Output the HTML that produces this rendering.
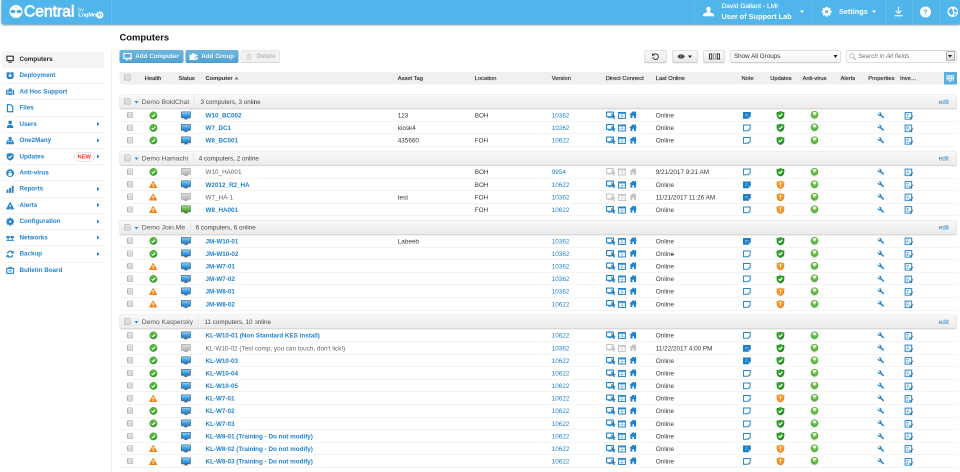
<!DOCTYPE html>
<html lang="en"><head><meta charset="utf-8"><title>LogMeIn Central - Computers</title>
<style>
*{box-sizing:border-box;margin:0;padding:0}
html,body{width:960px;height:472px;overflow:hidden;background:#fff}
body{font-family:"Liberation Sans",sans-serif;color:#333}
#p{will-change:transform;position:absolute;left:0;top:0;width:1920px;height:944px;transform:scale(.5);transform-origin:0 0;overflow:hidden;background:#fff}
.a{position:absolute;white-space:nowrap}
#hd{left:3px;top:0;width:1917px;height:49px;background:#50b5ea;box-shadow:0 1px 4px rgba(0,0,0,.5);border-radius:0 0 0 5px}
.hv{top:0;width:1px;height:49px;background:rgba(255,255,255,.22);box-shadow:-1px 0 0 rgba(0,0,0,.06)}
.si{left:3.5px;width:204px;height:32.46px;border-bottom:1px solid #e9e9e9}
.si b{position:absolute;left:35.4px;top:0;line-height:30px;font-size:12.55px;color:#2383cb;font-weight:bold}
.si svg{position:absolute;left:8.5px;top:7.6px;width:16.5px;height:16.5px}
.si i{position:absolute;left:190px;top:11.5px;border-left:5px solid #2383cb;border-top:4.5px solid transparent;border-bottom:4.5px solid transparent}
.btn{border-radius:4px;border:1.5px solid #52a2d0;border-top-color:#64b0dc;border-bottom-color:#4593c3;background:linear-gradient(#6ab7e0,#52a3d2)}
.gb{border-radius:4px;border:2px solid #e0e0e0;border-bottom-color:#cecece;background:linear-gradient(#fafafa,#e9e9e9);box-shadow:0 1px 1px rgba(0,0,0,.08)}
.th{font-size:11.5px;line-height:25.4px;color:#222;-webkit-text-stroke:.25px;top:143.6px;height:25px}
.gh{left:239px;width:1674.5px;height:29.2px;border:1.5px solid #e2e2e2;border-bottom-color:#c6c6c6;border-radius:4px;background:linear-gradient(#f9f9f9,#ebebeb);box-shadow:0 1px 1.5px rgba(0,0,0,.12)}
.gh .gn{position:absolute;left:43.6px;top:0;line-height:28.6px;font-size:13.45px;color:#555}
.gh .gc{position:absolute;top:0;line-height:28.6px;font-size:12.55px;color:#444}
.gh .gv{position:absolute;top:0;width:1px;height:26px;background:#dcdcdc;box-shadow:1px 0 0 #fafafa}
.gh .ge{position:absolute;left:1637.5px;top:0;line-height:28.6px;font-size:12.55px;color:#2383cb}
.gh .tri{position:absolute;left:28.5px;top:12.3px;border-top:5px solid #2a86c8;border-left:4.5px solid transparent;border-right:4.5px solid transparent}
.cb{position:absolute;width:13.2px;height:13.2px;border:1.6px solid #b2b2b2;border-radius:2px;background:linear-gradient(#e3e3e3,#d7d7d7)}
.r{left:239px;width:1674.5px;height:25.17px;border-bottom:1px solid #e9e9e9;font-size:12.7px;line-height:26.8px;color:#383838}
.r span,.r a{position:absolute;top:0;white-space:nowrap}
.r a{color:#2383cb;text-decoration:none}
.r a.n{font-weight:bold;left:172px;font-size:12.6px}
.r span.n{left:172px;color:#666}
.r svg{position:absolute}
svg{overflow:visible}
</style></head>
<body>
<div id="p">

<svg width="0" height="0" style="position:absolute">
<defs>
<linearGradient id="gg" x1="0" y1="0" x2="0" y2="1"><stop offset="0" stop-color="#63c440"/><stop offset="1" stop-color="#2c9a20"/></linearGradient>
<linearGradient id="sg" x1="0" y1="0" x2="0" y2="1"><stop offset="0" stop-color="#3bb030"/><stop offset="1" stop-color="#1d8a1c"/></linearGradient>
<linearGradient id="og" x1="0" y1="0" x2="0" y2="1"><stop offset="0" stop-color="#fbb040"/><stop offset="1" stop-color="#ee7a12"/></linearGradient>
<linearGradient id="mb" x1="0" y1="0" x2="0" y2="1"><stop offset="0" stop-color="#a4dcf8"/><stop offset=".45" stop-color="#4aa6e6"/><stop offset="1" stop-color="#1f7ccb"/></linearGradient>
<linearGradient id="mg" x1="0" y1="0" x2="0" y2="1"><stop offset="0" stop-color="#e4e4e4"/><stop offset="1" stop-color="#b4b4b4"/></linearGradient>
<linearGradient id="mgr" x1="0" y1="0" x2="0" y2="1"><stop offset="0" stop-color="#b4e39a"/><stop offset=".5" stop-color="#6cba4e"/><stop offset="1" stop-color="#4a9a34"/></linearGradient>
<radialGradient id="av" cx=".5" cy=".4" r=".62"><stop offset="0" stop-color="#d9f3c6"/><stop offset=".3" stop-color="#86d160"/><stop offset=".72" stop-color="#4cab31"/><stop offset=".9" stop-color="#5fb843"/><stop offset="1" stop-color="#a5dc8c"/></radialGradient>
</defs>
</svg>

<div id="hd" class="a"></div>
<div class="a hv" style="left:221.5px"></div>
<div class="a hv" style="left:1389px"></div>
<div class="a hv" style="left:1625.4px"></div>
<div class="a hv" style="left:1770px"></div>
<div class="a hv" style="left:1824px"></div>
<div class="a hv" style="left:1878px"></div>
<svg class="a" style="left:18.8px;top:9.6px;width:26px;height:26px" viewBox="-13 -13 26 26"><circle r="13" fill="#fff"/><circle cx="-7.6" r="3.3" fill="#44aae4"/><circle cx="7.6" r="3.3" fill="#44aae4"/><path d="M-5.2-4.6L-.4 0l-4.8 4.6zM5.2-4.6L.4 0l4.8 4.6z" fill="#44aae4"/></svg>
<div class="a" style="left:48px;top:1.2px;font-size:31px;line-height:43.4px;color:#fff;-webkit-text-stroke:1.5px #fff;letter-spacing:.15px;">Central</div>
<div class="a" style="left:156.5px;top:12.25px;font-size:10.5px;line-height:14.7px;color:#fff;">by</div>
<div class="a" style="left:156.5px;top:21.15px;font-size:11.5px;line-height:16.1px;color:#fff;font-weight:bold;letter-spacing:-.3px;">LogMe</div>
<div class="a" style="left:192.3px;top:22.8px;width:14.4px;height:14.4px;border-radius:7.2px;background:#fff"></div>
<div class="a" style="left:195px;top:22.25px;font-size:10.5px;line-height:14.7px;color:#50b5ea;font-weight:bold;">in</div>
<svg class="a" style="left:1405px;top:13px;width:24px;height:20px" viewBox="0 0 24 20"><path d="M12 .5c2.6 0 4.3 2 4.3 4.7 0 2-.8 3.9-2 4.9v1.5c2.5.8 7 2.3 8 3.4.7.8.9 2.6.9 4.5H.8c0-1.9.2-3.7.9-4.5 1-1.1 5.5-2.6 8-3.4v-1.5c-1.2-1-2-2.9-2-4.9C7.7 2.5 9.4.5 12 .5z" fill="#fff"/></svg>
<div class="a" style="left:1443px;top:2.56px;font-size:13.2px;line-height:18.48px;color:#fff;-webkit-text-stroke:.25px #fff;">David Gallant - LMI</div>
<div class="a" style="left:1443px;top:22.78px;font-size:14.6px;line-height:20.44px;color:#fff;font-weight:bold;">User of Support Lab</div>
<div class="a" style="left:1599.5px;top:20.5px;border-top:5.5px solid #fff;border-left:4.5px solid transparent;border-right:4.5px solid transparent"></div>
<svg class="a" style="left:1643.3px;top:13px;width:20.6px;height:20.6px" viewBox="-12 -12 24 24"><g fill="#fff"><rect x="-2.6" y="-11.5" width="5.2" height="6" rx="1" transform="rotate(0)"/><rect x="-2.6" y="-11.5" width="5.2" height="6" rx="1" transform="rotate(45)"/><rect x="-2.6" y="-11.5" width="5.2" height="6" rx="1" transform="rotate(90)"/><rect x="-2.6" y="-11.5" width="5.2" height="6" rx="1" transform="rotate(135)"/><rect x="-2.6" y="-11.5" width="5.2" height="6" rx="1" transform="rotate(180)"/><rect x="-2.6" y="-11.5" width="5.2" height="6" rx="1" transform="rotate(225)"/><rect x="-2.6" y="-11.5" width="5.2" height="6" rx="1" transform="rotate(270)"/><rect x="-2.6" y="-11.5" width="5.2" height="6" rx="1" transform="rotate(315)"/></g><circle r="6" fill="none" stroke="#fff" stroke-width="5"/></svg>
<div class="a" style="left:1678px;top:12.98px;font-size:14.6px;line-height:20.44px;color:#fff;font-weight:bold;">Settings</div>
<div class="a" style="left:1743.5px;top:20.5px;border-top:5.5px solid #fff;border-left:4.5px solid transparent;border-right:4.5px solid transparent"></div>
<svg class="a" style="left:1786px;top:12px;width:22px;height:22px" viewBox="0 0 22 22"><path d="M11 1.5v13M5.5 9.5l5.5 5.5 5.5-5.5" fill="none" stroke="#fff" stroke-width="2.2"/><path d="M3 19.5h16" stroke="#fff" stroke-width="2.2"/></svg>
<div class="a" style="left:1839.5px;top:12.5px;width:22px;height:22px;border-radius:11px;background:#fff;color:#50b5ea;font-weight:bold;font-size:15.5px;line-height:22px;text-align:center">?</div>
<svg class="a" style="left:1894px;top:12px;width:23px;height:23px" viewBox="0 0 23 23"><circle cx="11.5" cy="11.5" r="10.6" fill="#fff"/><path d="M4.2 7.2L9.6 4.2l2.6 8-1.6 6.6-3.8-1.8L3 12.2z" fill="#50b5ea"/><path d="M14 5l5 2.4 1.6 4.4-3.4 1.4-3.6-3.4z" fill="#50b5ea"/><path d="M13.5 15.5l3.5-.8 1.5 2.3-3 2.5z" fill="#50b5ea"/></svg>
<div class="a si" style="top:102.8px;background:#f5f5f5;"><svg viewBox="0 0 17 17"><path d="M2 2.5h13v9H2z" fill="none" stroke="#333" stroke-width="2.4" stroke-linejoin="round"/><path d="M5 14.8h7" stroke="#333" stroke-width="2.2"/></svg><b style="color:#222">Computers</b></div>
<div class="a si" style="top:135.26px;"><svg viewBox="0 0 17 17"><path d="M1.2 1.8h14.6v10l-3 3.7h-8.6l-3-3.7z" fill="#2383cb"/><path d="M8.5 4v6M5.3 7.4l3.2 3.2 3.2-3.2" stroke="#fff" stroke-width="2.2" fill="none"/></svg><b>Deployment</b></div>
<div class="a si" style="top:167.72px;"><svg viewBox="0 0 17 17"><path d="M4.8 4.2h7.4v11.3H4.8z" fill="#2383cb"/><path d="M6.6 4.2V2.6h3.8v1.6" fill="none" stroke="#2383cb" stroke-width="1.6"/><path d="M1.8 4.6v10.9M15.2 4.6v10.9" stroke="#2383cb" stroke-width="2.8"/><path d="M8.5 7.5v5M6.2 10h4.6" stroke="#fff" stroke-width="1.4"/></svg><b>Ad Hoc Support</b></div>
<div class="a si" style="top:200.18px;"><svg viewBox="0 0 17 17"><path d="M3 1.5h7l4 4v10.5H3z" fill="none" stroke="#2383cb" stroke-width="2.4" stroke-linejoin="round"/></svg><b>Files</b></div>
<div class="a si" style="top:232.64px;"><svg viewBox="0 0 17 17"><circle cx="8.5" cy="5" r="3.8" fill="#2383cb"/><path d="M1.8 15.8c0-4.2 2.5-5.8 6.7-5.8s6.7 1.6 6.7 5.8z" fill="#2383cb"/></svg><b>Users</b><i></i></div>
<div class="a si" style="top:265.1px;"><svg viewBox="0 0 17 17"><path d="M5.3 1.2h6.4v5.3H5.3zM.8 10.8h5v5.2h-5zM6.2 10.8h4.6v5.2H6.2zM11.2 10.8h5v5.2h-5z" fill="#2383cb"/><path d="M8.5 6v5M3.3 11V8.6h10.4V11" fill="none" stroke="#2383cb" stroke-width="1.7"/></svg><b>One2Many</b><i></i></div>
<div class="a si" style="top:297.56px;"><svg viewBox="0 0 17 17"><path d="M8.5 .8C6.5 2.1 4 2.8 1.3 2.8v5.7c0 4.2 2.9 6.7 7.2 8.2 4.3-1.5 7.2-4 7.2-8.2V2.8C13 2.8 10.5 2.1 8.5 .8z" fill="#2383cb"/><path d="M5 8.5l2.5 2.5 4.5-5" fill="none" stroke="#fff" stroke-width="2.2"/></svg><b>Updates</b><em style="position:absolute;left:144.5px;top:6px;width:41px;height:19.5px;border:1.5px solid #d0d0d0;border-radius:10px;background:#fff;font-style:normal;font-weight:bold;font-size:11.5px;line-height:17px;text-align:center;color:#f5322b">NEW</em><i></i></div>
<div class="a si" style="top:330.02px;"><svg viewBox="0 0 17 17"><circle cx="8.5" cy="8.5" r="8.1" fill="#2383cb"/><path d="M4.8 7.5h7.4v4.5c0 1.5-1.5 2.5-3.7 2.5S4.8 13.5 4.8 12zM6 6c0-1.5 1-2.5 2.5-2.5S11 4.5 11 6z" fill="#fff"/></svg><b>Anti-virus</b></div>
<div class="a si" style="top:362.48px;"><svg viewBox="0 0 17 17"><path d="M1.2 9.5h3.9v6.7H1.2zM6.5 6h3.9v10.2H6.5zM11.8 1.8h3.9v14.4h-3.9z" fill="#2383cb"/></svg><b>Reports</b><i></i></div>
<div class="a si" style="top:394.94px;"><svg viewBox="0 0 17 17"><path d="M8.5 1.5l7.5 14H1z" fill="#2383cb" stroke="#2383cb" stroke-width="1.4" stroke-linejoin="round"/><path d="M8.5 6.5v4.5M8.5 12.5v1.8" stroke="#fff" stroke-width="2.2"/></svg><b>Alerts</b><i></i></div>
<div class="a si" style="top:427.4px;"><svg viewBox="-12 -12 24 24"><g fill="#2383cb"><rect x="-2.8" y="-11.5" width="5.6" height="6" rx="1" transform="rotate(0)"/><rect x="-2.8" y="-11.5" width="5.6" height="6" rx="1" transform="rotate(45)"/><rect x="-2.8" y="-11.5" width="5.6" height="6" rx="1" transform="rotate(90)"/><rect x="-2.8" y="-11.5" width="5.6" height="6" rx="1" transform="rotate(135)"/><rect x="-2.8" y="-11.5" width="5.6" height="6" rx="1" transform="rotate(180)"/><rect x="-2.8" y="-11.5" width="5.6" height="6" rx="1" transform="rotate(225)"/><rect x="-2.8" y="-11.5" width="5.6" height="6" rx="1" transform="rotate(270)"/><rect x="-2.8" y="-11.5" width="5.6" height="6" rx="1" transform="rotate(315)"/></g><circle r="6" fill="none" stroke="#2383cb" stroke-width="5.5"/></svg><b>Configuration</b><i></i></div>
<div class="a si" style="top:459.86px;"><svg viewBox="0 0 17 17"><path d="M.8 5.2h6.9v4.3H.8zM9.3 5.2h6.9v4.3H9.3z" fill="#2383cb"/><path d="M4.2 9.5v4.5M12.8 9.5v4.5M.8 14.2h15.4" stroke="#2383cb" stroke-width="2"/></svg><b>Networks</b><i></i></div>
<div class="a si" style="top:492.32px;"><svg viewBox="0 0 17 17"><path d="M3 7.5a6 6 0 0 1 10.5-3M14 9.5a6 6 0 0 1-10.5 3" fill="none" stroke="#2383cb" stroke-width="2.5"/><path d="M16 1v6.2h-6.2zM1 16V9.8h6.2z" fill="#2383cb"/></svg><b>Backup</b><i></i></div>
<div class="a si" style="top:524.78px;border-bottom:0;"><svg viewBox="0 0 17 17"><path d="M1.5 5h14v10h-14z" fill="none" stroke="#2383cb" stroke-width="2.3" stroke-linejoin="round"/><path d="M6 5V2.5h5V5" fill="none" stroke="#2383cb" stroke-width="1.8"/><path d="M5 10h7" stroke="#2383cb" stroke-width="2"/></svg><b>Bulletin Board</b></div>
<div class="a" style="left:221.5px;top:102px;width:1px;height:842px;background:#e4e4e4"></div>
<div class="a" style="left:239px;top:62.44px;font-size:18.8px;line-height:26.32px;color:#111;font-weight:bold;">Computers</div>
<div class="a btn" style="left:239px;top:100px;width:128px;height:26px;"></div>
<svg class="a" style="left:246px;top:104.5px;width:19px;height:17px" viewBox="0 0 19 17"><path d="M1.5 2h15v9.5h-15z" fill="none" stroke="#fff" stroke-width="2.2" stroke-linejoin="round"/><path d="M5 14.5h5.5" stroke="#fff" stroke-width="2"/><path d="M14.5 9.5v6M11.5 12.5h6" stroke="#fff" stroke-width="2.2"/></svg>
<div class="a" style="left:270.5px;top:104.02px;font-size:12.55px;line-height:17.57px;color:#fff;font-weight:bold;text-shadow:0 -1px 0 rgba(0,0,0,.25);">Add Computer</div>
<div class="a btn" style="left:371px;top:100px;width:106px;height:26px;"></div>
<svg class="a" style="left:378px;top:105.5px;width:20px;height:15px" viewBox="0 0 20 15"><path d="M1 3.5h4l1.5-2.5h5l1.5 2.5h4v10.5H1z" fill="#fff"/><path d="M15.5 6.5v7M12 10h7" stroke="#4f9fce" stroke-width="4"/><path d="M15.5 7.5v6M12.5 10.5h6" stroke="#fff" stroke-width="2"/></svg>
<div class="a" style="left:402.5px;top:104.02px;font-size:12.55px;line-height:17.57px;color:#fff;font-weight:bold;text-shadow:0 -1px 0 rgba(0,0,0,.25);">Add Group</div>
<div class="a gb" style="left:481px;top:100px;width:79px;height:26px;background:#f2f2f2;border-color:#e7e7e7;border-bottom-color:#d6d6d6;box-shadow:none;"></div>
<svg class="a" style="left:491.5px;top:105.5px;width:12px;height:15px" viewBox="0 0 12 15"><path d="M1 3.5h10M4 3V1.5h4V3" fill="none" stroke="#dadada" stroke-width="1.6"/><path d="M2 4.5v9.5h8V4.5z" fill="#dedede" stroke="#dadada" stroke-width="1.2"/></svg>
<div class="a" style="left:513.5px;top:104.02px;font-size:12.55px;line-height:17.57px;color:#b9b9b9;font-weight:bold;">Delete</div>
<div class="a gb" style="left:1288px;top:100px;width:46px;height:26px;"></div>
<svg class="a" style="left:1303px;top:104.5px;width:16px;height:16px" viewBox="0 0 17 17"><path d="M4.2 4.8a6 6 0 1 1-1.5 5" fill="none" stroke="#333" stroke-width="2"/><path d="M.8 1.2l1 6.3 5.6-1.8z" fill="#333"/></svg>
<div class="a gb" style="left:1344px;top:100px;width:52px;height:26px;"></div>
<svg class="a" style="left:1355px;top:107.6px;width:14.5px;height:10px" viewBox="0 0 18 12"><ellipse cx="9" cy="6" rx="8.5" ry="5.4" fill="#444"/><circle cx="9" cy="6" r="2.8" fill="#999"/><circle cx="9" cy="6" r="1.5" fill="#333"/></svg>
<div class="a" style="left:1376px;top:110.6px;border-top:5px solid #222;border-left:4.5px solid transparent;border-right:4.5px solid transparent"></div>
<div class="a gb" style="left:1406px;top:100px;width:44px;height:26px;"></div>
<svg class="a" style="left:1417.5px;top:107px;width:22px;height:12px" viewBox="0 0 22 12"><path d="M1 1h4.5v10H1zM16.5 1H21v10h-4.5z" fill="none" stroke="#333" stroke-width="1.9"/><path d="M8.8 1h4.5v10H8.8z" fill="none" stroke="#9a9a9a" stroke-width="1.9"/></svg>
<div class="a gb" style="left:1460px;top:100px;width:222px;height:26px;background:linear-gradient(#fff,#f4f4f4);"></div>
<div class="a" style="left:1468px;top:104.22px;font-size:12.55px;line-height:17.57px;color:#333;">Show All Groups</div>
<div class="a" style="left:1667px;top:110.2px;border-top:6px solid #222;border-left:4px solid transparent;border-right:4px solid transparent"></div>
<div class="a gb" style="left:1692px;top:100px;width:222px;height:26px;background:#fff;border-color:#e0e0e0;border-top-color:#d6d6d6;box-shadow:none;"></div>
<svg class="a" style="left:1698px;top:106px;width:15px;height:15px" viewBox="0 0 14 14"><circle cx="5.5" cy="5.5" r="4.2" fill="none" stroke="#b0b0b0" stroke-width="1.6"/><path d="M8.5 8.5l4.5 4.5" stroke="#b0b0b0" stroke-width="2"/></svg>
<div class="a" style="left:1716px;top:104.02px;font-size:12.55px;line-height:17.57px;color:#777;font-style:italic;">Search in All fields</div>
<div class="a " style="left:1892px;top:103px;width:17.5px;height:18px;border:1.5px solid #6e6e6e;background:linear-gradient(#f6f6f6,#d8d8d8);"></div>
<div class="a" style="left:1896.2px;top:110px;border-top:5px solid #111;border-left:4.5px solid transparent;border-right:4.5px solid transparent"></div>
<div class="a" style="left:239px;top:143.6px;width:1674.5px;height:25.2px;background:#f0f0f0"></div>
<div class="cb" style="left:248.3px;top:148.3px"></div>
<div class="a th" style="left:289.5px;">Health</div>
<div class="a th" style="left:357px;">Status</div>
<div class="a th" style="left:411px;font-weight:bold;-webkit-text-stroke:0;color:#2a2a2a;">Computer</div>
<div class="a th" style="left:795.5px;">Asset Tag</div>
<div class="a th" style="left:949.5px;">Location</div>
<div class="a th" style="left:1103.5px;">Version</div>
<div class="a th" style="left:1211.5px;">Direct Connect</div>
<div class="a th" style="left:1311.5px;">Last Online</div>
<div class="a th" style="left:1483px;">Note</div>
<div class="a th" style="left:1540.5px;">Updates</div>
<div class="a th" style="left:1605px;">Anti-virus</div>
<div class="a th" style="left:1681px;">Alerts</div>
<div class="a th" style="left:1736.5px;">Properties</div>
<div class="a" style="left:468.5px;top:153px;border-bottom:6px solid #777;border-left:4px solid transparent;border-right:4px solid transparent"></div>
<div class="a th" style="left:1800px;width:34px;overflow:hidden;text-overflow:ellipsis">Inventory</div>
<div class="a" style="left:1887.5px;top:143.6px;width:26px;height:25px;background:#5aaedc"><svg style="position:absolute;left:5.5px;top:6px;width:15px;height:14px" viewBox="0 0 15 14"><path d="M.8.8h13.4v9.4H.8zM.8 4h13.4M.8 7h13.4M5.2.800v9.4M9.8.800v9.4" fill="none" stroke="#fff" stroke-width="1.3"/><path d="M5 11.5h5l-2.5 2.5z" fill="#fff"/></svg></div>
<div class="a gh" style="top:188.7px"><div class="cb" style="left:7.8px;top:6.3px"></div><div class="tri"></div><div class="gn">Demo BoldChat</div><div class="gv" style="left:148.5px"></div><div class="gc" style="left:161px">3 computers, 3 online</div><div class="ge">edit</div></div>
<div class="a r" style="top:218px"><div class="cb" style="left:14.7px;top:5.8px;width:12.6px;height:12.6px"></div><svg style="left:59.6px;top:4.8px;width:15.7px;height:15.7px;" viewBox="0 0 16 16"><circle cx="8" cy="8" r="7.5" fill="url(#gg)" stroke="#2f9d24" stroke-width="1"/><path d="M4.3 8.4l2.5 2.4 4.9-5.2" fill="none" stroke="#fff" stroke-width="2.4"/></svg><svg style="left:123.2px;top:4.5px;width:19.6px;height:16.2px;" viewBox="0 0 20 16.5"><rect x=".8" y=".8" width="18.4" height="12.2" rx=".4" fill="url(#mb)" stroke="#3d6e9c" stroke-width="1.5"/><path d="M7.2 13.8h5.6v1.5h-5.6z" fill="#2a2a2a"/><path d="M5 15.3h10v1.2h-10z" fill="#a8a8a8"/></svg><a class="n">W10_BC002</a><span style="left:556.5px">123</span><span style="left:710.5px">BOH</span><a style="left:864.5px">10362</a><svg style="left:973px;top:4.9px;width:18.7px;height:15.2px;color:#2383cb;" viewBox="0 0 19 15.5"><path d="M1.1 1.1h14v9.8h-14z" fill="#fff" stroke="currentColor" stroke-width="2.2" stroke-linejoin="round"/><path d="M4.8 12.6h5" stroke="currentColor" stroke-width="2"/><path d="M11.4 4.2V13.6L14 11.6 15.9 15.3 17.9 14.3 16 10.7 19.2 10.4z" fill="currentColor" stroke="currentColor" stroke-width=".9" stroke-linejoin="round"/></svg><svg style="left:997.2px;top:6.1px;width:16px;height:14px;color:#2383cb;" viewBox="0 0 16 14"><path d="M.8.9h14.4v12.2H.8z" fill="currentColor" fill-opacity=".5" stroke="currentColor" stroke-width="1.6"/><path d="M.8 1.9h14.4" stroke="currentColor" stroke-width="2"/><path d="M2.3 4.6h4.5v3.2H2.3zM9.2 4.6h4.5v3.2H9.2zM2.3 8.9h4.5v3H2.3zM9.2 8.9h4.5v3H9.2z" fill="#fff"/></svg><svg style="left:1019.6px;top:4.4px;width:14.9px;height:14.4px;color:#2383cb;" viewBox="0 0 15 14.5"><path d="M7.5 0L-.3 7.4h2.2v7h4V9.6h3.2v4.8h4v-7h2.2L12.9 5.2V.9h-2.4v2z" fill="currentColor"/></svg><span style="left:1072.5px">Online</span><svg style="left:1247px;top:6px;width:15.5px;height:13.5px;" viewBox="0 0 16 14"><path d="M.6.6h14.8v8.8l-4 4H.6z" fill="#1a7cc8" stroke="#1a7cc8" stroke-width="1.2"/><path d="M11.2 13.2V9.2h4z" fill="#9acbee"/><path d="M4 5h7.5M4 8h4.5" stroke="#7dbdea" stroke-width="1.5"/></svg><svg style="left:1313.5px;top:4.3px;width:15.9px;height:16.9px;" viewBox="0 0 16 17"><path d="M8 .7C5.8 2.1 3.4 2.7.9 2.7v5.5c0 4 2.8 6.7 7.1 8.1 4.3-1.4 7.1-4.1 7.1-8.1V2.7C12.6 2.7 10.2 2.1 8 .7z" fill="url(#sg)" stroke="#1f861c" stroke-width="1.2"/><path d="M4.3 8.3l2.7 2.6 4.7-5.2" fill="none" stroke="#fff" stroke-width="2.7"/></svg><svg style="left:1380.5px;top:3.2px;width:18px;height:20px;" viewBox="0 0 18 20"><ellipse cx="9" cy="16.6" rx="6" ry="1.8" fill="rgba(0,0,0,.1)"/><circle cx="9" cy="8.5" r="7.7" fill="url(#av)"/><ellipse cx="9.2" cy="5.6" rx="3.5" ry="2.7" fill="rgba(255,255,255,.85)"/></svg><svg style="left:1516.2px;top:5.8px;width:13.4px;height:12.4px;" viewBox="0 0 14 13"><path d="M6 6l6 5.5" stroke="#2383cb" stroke-width="3.2" stroke-linecap="round"/><circle cx="4.4" cy="4.4" r="2.7" fill="none" stroke="#2383cb" stroke-width="2.5"/><path d="M4 4.2L.5 0" stroke="#fff" stroke-width="2.6"/></svg><svg style="left:1569.5px;top:5.5px;width:18px;height:16px;" viewBox="0 0 18 16"><path d="M1.2 1.2h13.2v13.2H1.2z" fill="#fff" stroke="#2383cb" stroke-width="1.9"/><path d="M4 5h4.5M4 8h4.5M4 11h3" stroke="#4a9ad6" stroke-width="1.4"/><path d="M9.8 10.2l2.6 2.7 4.4-5.3" fill="none" stroke="#2383cb" stroke-width="2.1"/></svg></div>
<div class="a r" style="top:243.17px"><div class="cb" style="left:14.7px;top:5.8px;width:12.6px;height:12.6px"></div><svg style="left:59.6px;top:4.8px;width:15.7px;height:15.7px;" viewBox="0 0 16 16"><circle cx="8" cy="8" r="7.5" fill="url(#gg)" stroke="#2f9d24" stroke-width="1"/><path d="M4.3 8.4l2.5 2.4 4.9-5.2" fill="none" stroke="#fff" stroke-width="2.4"/></svg><svg style="left:123.2px;top:4.5px;width:19.6px;height:16.2px;" viewBox="0 0 20 16.5"><rect x=".8" y=".8" width="18.4" height="12.2" rx=".4" fill="url(#mb)" stroke="#3d6e9c" stroke-width="1.5"/><path d="M7.2 13.8h5.6v1.5h-5.6z" fill="#2a2a2a"/><path d="M5 15.3h10v1.2h-10z" fill="#a8a8a8"/></svg><a class="n">W7_BC1</a><span style="left:556.5px">kiosk4</span><a style="left:864.5px">10362</a><svg style="left:973px;top:4.9px;width:18.7px;height:15.2px;color:#2383cb;" viewBox="0 0 19 15.5"><path d="M1.1 1.1h14v9.8h-14z" fill="#fff" stroke="currentColor" stroke-width="2.2" stroke-linejoin="round"/><path d="M4.8 12.6h5" stroke="currentColor" stroke-width="2"/><path d="M11.4 4.2V13.6L14 11.6 15.9 15.3 17.9 14.3 16 10.7 19.2 10.4z" fill="currentColor" stroke="currentColor" stroke-width=".9" stroke-linejoin="round"/></svg><svg style="left:997.2px;top:6.1px;width:16px;height:14px;color:#2383cb;" viewBox="0 0 16 14"><path d="M.8.9h14.4v12.2H.8z" fill="currentColor" fill-opacity=".5" stroke="currentColor" stroke-width="1.6"/><path d="M.8 1.9h14.4" stroke="currentColor" stroke-width="2"/><path d="M2.3 4.6h4.5v3.2H2.3zM9.2 4.6h4.5v3.2H9.2zM2.3 8.9h4.5v3H2.3zM9.2 8.9h4.5v3H9.2z" fill="#fff"/></svg><svg style="left:1019.6px;top:4.4px;width:14.9px;height:14.4px;color:#2383cb;" viewBox="0 0 15 14.5"><path d="M7.5 0L-.3 7.4h2.2v7h4V9.6h3.2v4.8h4v-7h2.2L12.9 5.2V.9h-2.4v2z" fill="currentColor"/></svg><span style="left:1072.5px">Online</span><svg style="left:1247px;top:6px;width:15.5px;height:13.5px;" viewBox="0 0 16 14"><path d="M1.1 1.1h13.8v8.2L11.2 12.9H1.1z" fill="#fff" stroke="#2383cb" stroke-width="2"/><path d="M11 13V9.2h3.8" fill="none" stroke="#8cc4ea" stroke-width="1.2"/></svg><svg style="left:1313.5px;top:4.3px;width:15.9px;height:16.9px;" viewBox="0 0 16 17"><path d="M8 .7C5.8 2.1 3.4 2.7.9 2.7v5.5c0 4 2.8 6.7 7.1 8.1 4.3-1.4 7.1-4.1 7.1-8.1V2.7C12.6 2.7 10.2 2.1 8 .7z" fill="url(#sg)" stroke="#1f861c" stroke-width="1.2"/><path d="M4.3 8.3l2.7 2.6 4.7-5.2" fill="none" stroke="#fff" stroke-width="2.7"/></svg><svg style="left:1380.5px;top:3.2px;width:18px;height:20px;" viewBox="0 0 18 20"><ellipse cx="9" cy="16.6" rx="6" ry="1.8" fill="rgba(0,0,0,.1)"/><circle cx="9" cy="8.5" r="7.7" fill="url(#av)"/><ellipse cx="9.2" cy="5.6" rx="3.5" ry="2.7" fill="rgba(255,255,255,.85)"/></svg><svg style="left:1516.2px;top:5.8px;width:13.4px;height:12.4px;" viewBox="0 0 14 13"><path d="M6 6l6 5.5" stroke="#2383cb" stroke-width="3.2" stroke-linecap="round"/><circle cx="4.4" cy="4.4" r="2.7" fill="none" stroke="#2383cb" stroke-width="2.5"/><path d="M4 4.2L.5 0" stroke="#fff" stroke-width="2.6"/></svg><svg style="left:1569.5px;top:5.5px;width:18px;height:16px;" viewBox="0 0 18 16"><path d="M1.2 1.2h13.2v13.2H1.2z" fill="#fff" stroke="#2383cb" stroke-width="1.9"/><path d="M4 5h4.5M4 8h4.5M4 11h3" stroke="#4a9ad6" stroke-width="1.4"/><path d="M9.8 10.2l2.6 2.7 4.4-5.3" fill="none" stroke="#2383cb" stroke-width="2.1"/></svg></div>
<div class="a r" style="top:268.34px"><div class="cb" style="left:14.7px;top:5.8px;width:12.6px;height:12.6px"></div><svg style="left:59.6px;top:4.8px;width:15.7px;height:15.7px;" viewBox="0 0 16 16"><circle cx="8" cy="8" r="7.5" fill="url(#gg)" stroke="#2f9d24" stroke-width="1"/><path d="M4.3 8.4l2.5 2.4 4.9-5.2" fill="none" stroke="#fff" stroke-width="2.4"/></svg><svg style="left:123.2px;top:4.5px;width:19.6px;height:16.2px;" viewBox="0 0 20 16.5"><rect x=".8" y=".8" width="18.4" height="12.2" rx=".4" fill="url(#mb)" stroke="#3d6e9c" stroke-width="1.5"/><path d="M7.2 13.8h5.6v1.5h-5.6z" fill="#2a2a2a"/><path d="M5 15.3h10v1.2h-10z" fill="#a8a8a8"/></svg><a class="n">W8_BC001</a><span style="left:556.5px">435660</span><span style="left:710.5px">FOH</span><a style="left:864.5px">10622</a><svg style="left:973px;top:4.9px;width:18.7px;height:15.2px;color:#2383cb;" viewBox="0 0 19 15.5"><path d="M1.1 1.1h14v9.8h-14z" fill="#fff" stroke="currentColor" stroke-width="2.2" stroke-linejoin="round"/><path d="M4.8 12.6h5" stroke="currentColor" stroke-width="2"/><path d="M11.4 4.2V13.6L14 11.6 15.9 15.3 17.9 14.3 16 10.7 19.2 10.4z" fill="currentColor" stroke="currentColor" stroke-width=".9" stroke-linejoin="round"/></svg><svg style="left:997.2px;top:6.1px;width:16px;height:14px;color:#2383cb;" viewBox="0 0 16 14"><path d="M.8.9h14.4v12.2H.8z" fill="currentColor" fill-opacity=".5" stroke="currentColor" stroke-width="1.6"/><path d="M.8 1.9h14.4" stroke="currentColor" stroke-width="2"/><path d="M2.3 4.6h4.5v3.2H2.3zM9.2 4.6h4.5v3.2H9.2zM2.3 8.9h4.5v3H2.3zM9.2 8.9h4.5v3H9.2z" fill="#fff"/></svg><svg style="left:1019.6px;top:4.4px;width:14.9px;height:14.4px;color:#2383cb;" viewBox="0 0 15 14.5"><path d="M7.5 0L-.3 7.4h2.2v7h4V9.6h3.2v4.8h4v-7h2.2L12.9 5.2V.9h-2.4v2z" fill="currentColor"/></svg><span style="left:1072.5px">Online</span><svg style="left:1247px;top:6px;width:15.5px;height:13.5px;" viewBox="0 0 16 14"><path d="M1.1 1.1h13.8v8.2L11.2 12.9H1.1z" fill="#fff" stroke="#2383cb" stroke-width="2"/><path d="M11 13V9.2h3.8" fill="none" stroke="#8cc4ea" stroke-width="1.2"/></svg><svg style="left:1313.5px;top:4.3px;width:15.9px;height:16.9px;" viewBox="0 0 16 17"><path d="M8 .7C5.8 2.1 3.4 2.7.9 2.7v5.5c0 4 2.8 6.7 7.1 8.1 4.3-1.4 7.1-4.1 7.1-8.1V2.7C12.6 2.7 10.2 2.1 8 .7z" fill="url(#sg)" stroke="#1f861c" stroke-width="1.2"/><path d="M4.3 8.3l2.7 2.6 4.7-5.2" fill="none" stroke="#fff" stroke-width="2.7"/></svg><svg style="left:1380.5px;top:3.2px;width:18px;height:20px;" viewBox="0 0 18 20"><ellipse cx="9" cy="16.6" rx="6" ry="1.8" fill="rgba(0,0,0,.1)"/><circle cx="9" cy="8.5" r="7.7" fill="url(#av)"/><ellipse cx="9.2" cy="5.6" rx="3.5" ry="2.7" fill="rgba(255,255,255,.85)"/></svg><svg style="left:1516.2px;top:5.8px;width:13.4px;height:12.4px;" viewBox="0 0 14 13"><path d="M6 6l6 5.5" stroke="#2383cb" stroke-width="3.2" stroke-linecap="round"/><circle cx="4.4" cy="4.4" r="2.7" fill="none" stroke="#2383cb" stroke-width="2.5"/><path d="M4 4.2L.5 0" stroke="#fff" stroke-width="2.6"/></svg><svg style="left:1569.5px;top:5.5px;width:18px;height:16px;" viewBox="0 0 18 16"><path d="M1.2 1.2h13.2v13.2H1.2z" fill="#fff" stroke="#2383cb" stroke-width="1.9"/><path d="M4 5h4.5M4 8h4.5M4 11h3" stroke="#4a9ad6" stroke-width="1.4"/><path d="M9.8 10.2l2.6 2.7 4.4-5.3" fill="none" stroke="#2383cb" stroke-width="2.1"/></svg></div>
<div class="a gh" style="top:302.05px"><div class="cb" style="left:7.8px;top:6.3px"></div><div class="tri"></div><div class="gn">Demo Hamachi</div><div class="gv" style="left:145.5px"></div><div class="gc" style="left:157.5px">4 computers, 2 online</div><div class="ge">edit</div></div>
<div class="a r" style="top:331.35px"><div class="cb" style="left:14.7px;top:5.8px;width:12.6px;height:12.6px"></div><svg style="left:59.6px;top:4.8px;width:15.7px;height:15.7px;" viewBox="0 0 16 16"><circle cx="8" cy="8" r="7.5" fill="url(#gg)" stroke="#2f9d24" stroke-width="1"/><path d="M4.3 8.4l2.5 2.4 4.9-5.2" fill="none" stroke="#fff" stroke-width="2.4"/></svg><svg style="left:123.2px;top:4.5px;width:19.6px;height:16.2px;" viewBox="0 0 20 16.5"><rect x=".8" y=".8" width="18.4" height="12.2" rx=".4" fill="url(#mg)" stroke="#adadad" stroke-width="1.5"/><path d="M7.2 13.8h5.6v1.5h-5.6z" fill="#858585"/><path d="M5 15.3h10v1.2h-10z" fill="#d0d0d0"/></svg><span class="n">W10_HA001</span><span style="left:710.5px">BOH</span><a style="left:864.5px">9954</a><svg style="left:973px;top:4.9px;width:18.7px;height:15.2px;color:#c4c4c4;" viewBox="0 0 19 15.5"><path d="M1.1 1.1h14v9.8h-14z" fill="#fff" stroke="currentColor" stroke-width="2.2" stroke-linejoin="round"/><path d="M4.8 12.6h5" stroke="currentColor" stroke-width="2"/><path d="M11.4 4.2V13.6L14 11.6 15.9 15.3 17.9 14.3 16 10.7 19.2 10.4z" fill="currentColor" stroke="currentColor" stroke-width=".9" stroke-linejoin="round"/></svg><svg style="left:997.2px;top:6.1px;width:16px;height:14px;color:#c4c4c4;" viewBox="0 0 16 14"><path d="M.8.9h14.4v12.2H.8z" fill="currentColor" fill-opacity=".5" stroke="currentColor" stroke-width="1.6"/><path d="M.8 1.9h14.4" stroke="currentColor" stroke-width="2"/><path d="M2.3 4.6h4.5v3.2H2.3zM9.2 4.6h4.5v3.2H9.2zM2.3 8.9h4.5v3H2.3zM9.2 8.9h4.5v3H9.2z" fill="#fff"/></svg><svg style="left:1019.6px;top:4.4px;width:14.9px;height:14.4px;color:#c4c4c4;" viewBox="0 0 15 14.5"><path d="M7.5 0L-.3 7.4h2.2v7h4V9.6h3.2v4.8h4v-7h2.2L12.9 5.2V.9h-2.4v2z" fill="currentColor"/></svg><span style="left:1072.5px">9/21/2017 9:21 AM</span><svg style="left:1247px;top:6px;width:15.5px;height:13.5px;" viewBox="0 0 16 14"><path d="M1.1 1.1h13.8v8.2L11.2 12.9H1.1z" fill="#fff" stroke="#2383cb" stroke-width="2"/><path d="M11 13V9.2h3.8" fill="none" stroke="#8cc4ea" stroke-width="1.2"/></svg><svg style="left:1313.5px;top:4.3px;width:15.9px;height:16.9px;" viewBox="0 0 16 17"><path d="M8 .7C5.8 2.1 3.4 2.7.9 2.7v5.5c0 4 2.8 6.7 7.1 8.1 4.3-1.4 7.1-4.1 7.1-8.1V2.7C12.6 2.7 10.2 2.1 8 .7z" fill="url(#sg)" stroke="#1f861c" stroke-width="1.2"/><path d="M4.3 8.3l2.7 2.6 4.7-5.2" fill="none" stroke="#fff" stroke-width="2.7"/></svg><svg style="left:1380.5px;top:3.2px;width:18px;height:20px;" viewBox="0 0 18 20"><ellipse cx="9" cy="16.6" rx="6" ry="1.8" fill="rgba(0,0,0,.1)"/><circle cx="9" cy="8.5" r="7.7" fill="url(#av)"/><ellipse cx="9.2" cy="5.6" rx="3.5" ry="2.7" fill="rgba(255,255,255,.85)"/></svg><svg style="left:1516.2px;top:5.8px;width:13.4px;height:12.4px;" viewBox="0 0 14 13"><path d="M6 6l6 5.5" stroke="#2383cb" stroke-width="3.2" stroke-linecap="round"/><circle cx="4.4" cy="4.4" r="2.7" fill="none" stroke="#2383cb" stroke-width="2.5"/><path d="M4 4.2L.5 0" stroke="#fff" stroke-width="2.6"/></svg><svg style="left:1569.5px;top:5.5px;width:18px;height:16px;" viewBox="0 0 18 16"><path d="M1.2 1.2h13.2v13.2H1.2z" fill="#fff" stroke="#2383cb" stroke-width="1.9"/><path d="M4 5h4.5M4 8h4.5M4 11h3" stroke="#4a9ad6" stroke-width="1.4"/><path d="M9.8 10.2l2.6 2.7 4.4-5.3" fill="none" stroke="#2383cb" stroke-width="2.1"/></svg></div>
<div class="a r" style="top:356.52px"><div class="cb" style="left:14.7px;top:5.8px;width:12.6px;height:12.6px"></div><svg style="left:58.6px;top:4.6px;width:16.6px;height:15.6px;" viewBox="0 0 18 16"><path d="M9 1.2L17 15H1z" fill="url(#og)" stroke="#ee8216" stroke-width="1.6" stroke-linejoin="round"/><path d="M9 5.2v5.2M9 11.8v1.9" stroke="#fff" stroke-width="2.2"/></svg><svg style="left:123.2px;top:4.5px;width:19.6px;height:16.2px;" viewBox="0 0 20 16.5"><rect x=".8" y=".8" width="18.4" height="12.2" rx=".4" fill="url(#mb)" stroke="#3d6e9c" stroke-width="1.5"/><path d="M7.2 13.8h5.6v1.5h-5.6z" fill="#2a2a2a"/><path d="M5 15.3h10v1.2h-10z" fill="#a8a8a8"/></svg><a class="n">W2012_R2_HA</a><span style="left:710.5px">BOH</span><a style="left:864.5px">10622</a><svg style="left:973px;top:4.9px;width:18.7px;height:15.2px;color:#2383cb;" viewBox="0 0 19 15.5"><path d="M1.1 1.1h14v9.8h-14z" fill="#fff" stroke="currentColor" stroke-width="2.2" stroke-linejoin="round"/><path d="M4.8 12.6h5" stroke="currentColor" stroke-width="2"/><path d="M11.4 4.2V13.6L14 11.6 15.9 15.3 17.9 14.3 16 10.7 19.2 10.4z" fill="currentColor" stroke="currentColor" stroke-width=".9" stroke-linejoin="round"/></svg><svg style="left:997.2px;top:6.1px;width:16px;height:14px;color:#2383cb;" viewBox="0 0 16 14"><path d="M.8.9h14.4v12.2H.8z" fill="currentColor" fill-opacity=".5" stroke="currentColor" stroke-width="1.6"/><path d="M.8 1.9h14.4" stroke="currentColor" stroke-width="2"/><path d="M2.3 4.6h4.5v3.2H2.3zM9.2 4.6h4.5v3.2H9.2zM2.3 8.9h4.5v3H2.3zM9.2 8.9h4.5v3H9.2z" fill="#fff"/></svg><svg style="left:1019.6px;top:4.4px;width:14.9px;height:14.4px;color:#2383cb;" viewBox="0 0 15 14.5"><path d="M7.5 0L-.3 7.4h2.2v7h4V9.6h3.2v4.8h4v-7h2.2L12.9 5.2V.9h-2.4v2z" fill="currentColor"/></svg><span style="left:1072.5px">Online</span><svg style="left:1247px;top:6px;width:15.5px;height:13.5px;" viewBox="0 0 16 14"><path d="M.6.6h14.8v8.8l-4 4H.6z" fill="#1a7cc8" stroke="#1a7cc8" stroke-width="1.2"/><path d="M11.2 13.2V9.2h4z" fill="#9acbee"/><path d="M4 5h7.5M4 8h4.5" stroke="#7dbdea" stroke-width="1.5"/></svg><svg style="left:1313.5px;top:4.3px;width:15.9px;height:16.9px;" viewBox="0 0 16 17"><path d="M8 .7C5.8 2.1 3.4 2.7.9 2.7v5.5c0 4 2.8 6.7 7.1 8.1 4.3-1.4 7.1-4.1 7.1-8.1V2.7C12.6 2.7 10.2 2.1 8 .7z" fill="url(#og)" stroke="#ea8a22" stroke-width="1.2"/><path d="M8 4v5.6M8 11v2" stroke="#fff" stroke-width="2.4"/></svg><svg style="left:1380.5px;top:3.2px;width:18px;height:20px;" viewBox="0 0 18 20"><ellipse cx="9" cy="16.6" rx="6" ry="1.8" fill="rgba(0,0,0,.1)"/><circle cx="9" cy="8.5" r="7.7" fill="url(#av)"/><ellipse cx="9.2" cy="5.6" rx="3.5" ry="2.7" fill="rgba(255,255,255,.85)"/></svg><svg style="left:1516.2px;top:5.8px;width:13.4px;height:12.4px;" viewBox="0 0 14 13"><path d="M6 6l6 5.5" stroke="#2383cb" stroke-width="3.2" stroke-linecap="round"/><circle cx="4.4" cy="4.4" r="2.7" fill="none" stroke="#2383cb" stroke-width="2.5"/><path d="M4 4.2L.5 0" stroke="#fff" stroke-width="2.6"/></svg><svg style="left:1569.5px;top:5.5px;width:18px;height:16px;" viewBox="0 0 18 16"><path d="M1.2 1.2h13.2v13.2H1.2z" fill="#fff" stroke="#2383cb" stroke-width="1.9"/><path d="M4 5h4.5M4 8h4.5M4 11h3" stroke="#4a9ad6" stroke-width="1.4"/><path d="M9.8 10.2l2.6 2.7 4.4-5.3" fill="none" stroke="#2383cb" stroke-width="2.1"/></svg></div>
<div class="a r" style="top:381.69px"><div class="cb" style="left:14.7px;top:5.8px;width:12.6px;height:12.6px"></div><svg style="left:58.6px;top:4.6px;width:16.6px;height:15.6px;" viewBox="0 0 18 16"><path d="M9 1.2L17 15H1z" fill="url(#og)" stroke="#ee8216" stroke-width="1.6" stroke-linejoin="round"/><path d="M9 5.2v5.2M9 11.8v1.9" stroke="#fff" stroke-width="2.2"/></svg><svg style="left:123.2px;top:4.5px;width:19.6px;height:16.2px;" viewBox="0 0 20 16.5"><rect x=".8" y=".8" width="18.4" height="12.2" rx=".4" fill="url(#mg)" stroke="#adadad" stroke-width="1.5"/><path d="M7.2 13.8h5.6v1.5h-5.6z" fill="#858585"/><path d="M5 15.3h10v1.2h-10z" fill="#d0d0d0"/></svg><span class="n">W7_HA-1</span><span style="left:556.5px">test</span><span style="left:710.5px">FOH</span><a style="left:864.5px">10362</a><svg style="left:973px;top:4.9px;width:18.7px;height:15.2px;color:#c4c4c4;" viewBox="0 0 19 15.5"><path d="M1.1 1.1h14v9.8h-14z" fill="#fff" stroke="currentColor" stroke-width="2.2" stroke-linejoin="round"/><path d="M4.8 12.6h5" stroke="currentColor" stroke-width="2"/><path d="M11.4 4.2V13.6L14 11.6 15.9 15.3 17.9 14.3 16 10.7 19.2 10.4z" fill="currentColor" stroke="currentColor" stroke-width=".9" stroke-linejoin="round"/></svg><svg style="left:997.2px;top:6.1px;width:16px;height:14px;color:#c4c4c4;" viewBox="0 0 16 14"><path d="M.8.9h14.4v12.2H.8z" fill="currentColor" fill-opacity=".5" stroke="currentColor" stroke-width="1.6"/><path d="M.8 1.9h14.4" stroke="currentColor" stroke-width="2"/><path d="M2.3 4.6h4.5v3.2H2.3zM9.2 4.6h4.5v3.2H9.2zM2.3 8.9h4.5v3H2.3zM9.2 8.9h4.5v3H9.2z" fill="#fff"/></svg><svg style="left:1019.6px;top:4.4px;width:14.9px;height:14.4px;color:#c4c4c4;" viewBox="0 0 15 14.5"><path d="M7.5 0L-.3 7.4h2.2v7h4V9.6h3.2v4.8h4v-7h2.2L12.9 5.2V.9h-2.4v2z" fill="currentColor"/></svg><span style="left:1072.5px">11/21/2017 11:26 AM</span><svg style="left:1247px;top:6px;width:15.5px;height:13.5px;" viewBox="0 0 16 14"><path d="M.6.6h14.8v8.8l-4 4H.6z" fill="#1a7cc8" stroke="#1a7cc8" stroke-width="1.2"/><path d="M11.2 13.2V9.2h4z" fill="#9acbee"/><path d="M4 5h7.5M4 8h4.5" stroke="#7dbdea" stroke-width="1.5"/></svg><svg style="left:1313.5px;top:4.3px;width:15.9px;height:16.9px;" viewBox="0 0 16 17"><path d="M8 .7C5.8 2.1 3.4 2.7.9 2.7v5.5c0 4 2.8 6.7 7.1 8.1 4.3-1.4 7.1-4.1 7.1-8.1V2.7C12.6 2.7 10.2 2.1 8 .7z" fill="url(#og)" stroke="#ea8a22" stroke-width="1.2"/><path d="M8 4v5.6M8 11v2" stroke="#fff" stroke-width="2.4"/></svg><svg style="left:1380.5px;top:3.2px;width:18px;height:20px;" viewBox="0 0 18 20"><ellipse cx="9" cy="16.6" rx="6" ry="1.8" fill="rgba(0,0,0,.1)"/><circle cx="9" cy="8.5" r="7.7" fill="url(#av)"/><ellipse cx="9.2" cy="5.6" rx="3.5" ry="2.7" fill="rgba(255,255,255,.85)"/></svg><svg style="left:1516.2px;top:5.8px;width:13.4px;height:12.4px;" viewBox="0 0 14 13"><path d="M6 6l6 5.5" stroke="#2383cb" stroke-width="3.2" stroke-linecap="round"/><circle cx="4.4" cy="4.4" r="2.7" fill="none" stroke="#2383cb" stroke-width="2.5"/><path d="M4 4.2L.5 0" stroke="#fff" stroke-width="2.6"/></svg><svg style="left:1569.5px;top:5.5px;width:18px;height:16px;" viewBox="0 0 18 16"><path d="M1.2 1.2h13.2v13.2H1.2z" fill="#fff" stroke="#2383cb" stroke-width="1.9"/><path d="M4 5h4.5M4 8h4.5M4 11h3" stroke="#4a9ad6" stroke-width="1.4"/><path d="M9.8 10.2l2.6 2.7 4.4-5.3" fill="none" stroke="#2383cb" stroke-width="2.1"/></svg></div>
<div class="a r" style="top:406.86px"><div class="cb" style="left:14.7px;top:5.8px;width:12.6px;height:12.6px"></div><svg style="left:58.6px;top:4.6px;width:16.6px;height:15.6px;" viewBox="0 0 18 16"><path d="M9 1.2L17 15H1z" fill="url(#og)" stroke="#ee8216" stroke-width="1.6" stroke-linejoin="round"/><path d="M9 5.2v5.2M9 11.8v1.9" stroke="#fff" stroke-width="2.2"/></svg><svg style="left:123.2px;top:4.5px;width:19.6px;height:16.2px;" viewBox="0 0 20 16.5"><rect x=".8" y=".8" width="18.4" height="12.2" rx=".4" fill="url(#mgr)" stroke="#557d4a" stroke-width="1.5"/><path d="M7.2 13.8h5.6v1.5h-5.6z" fill="#2a2a2a"/><path d="M5 15.3h10v1.2h-10z" fill="#a8a8a8"/></svg><a class="n">W8_HA001</a><span style="left:710.5px">FOH</span><a style="left:864.5px">10622</a><svg style="left:973px;top:4.9px;width:18.7px;height:15.2px;color:#2383cb;" viewBox="0 0 19 15.5"><path d="M1.1 1.1h14v9.8h-14z" fill="#fff" stroke="currentColor" stroke-width="2.2" stroke-linejoin="round"/><path d="M4.8 12.6h5" stroke="currentColor" stroke-width="2"/><path d="M11.4 4.2V13.6L14 11.6 15.9 15.3 17.9 14.3 16 10.7 19.2 10.4z" fill="currentColor" stroke="currentColor" stroke-width=".9" stroke-linejoin="round"/></svg><svg style="left:997.2px;top:6.1px;width:16px;height:14px;color:#2383cb;" viewBox="0 0 16 14"><path d="M.8.9h14.4v12.2H.8z" fill="currentColor" fill-opacity=".5" stroke="currentColor" stroke-width="1.6"/><path d="M.8 1.9h14.4" stroke="currentColor" stroke-width="2"/><path d="M2.3 4.6h4.5v3.2H2.3zM9.2 4.6h4.5v3.2H9.2zM2.3 8.9h4.5v3H2.3zM9.2 8.9h4.5v3H9.2z" fill="#fff"/></svg><svg style="left:1019.6px;top:4.4px;width:14.9px;height:14.4px;color:#2383cb;" viewBox="0 0 15 14.5"><path d="M7.5 0L-.3 7.4h2.2v7h4V9.6h3.2v4.8h4v-7h2.2L12.9 5.2V.9h-2.4v2z" fill="currentColor"/></svg><span style="left:1072.5px">Online</span><svg style="left:1247px;top:6px;width:15.5px;height:13.5px;" viewBox="0 0 16 14"><path d="M1.1 1.1h13.8v8.2L11.2 12.9H1.1z" fill="#fff" stroke="#2383cb" stroke-width="2"/><path d="M11 13V9.2h3.8" fill="none" stroke="#8cc4ea" stroke-width="1.2"/></svg><svg style="left:1313.5px;top:4.3px;width:15.9px;height:16.9px;" viewBox="0 0 16 17"><path d="M8 .7C5.8 2.1 3.4 2.7.9 2.7v5.5c0 4 2.8 6.7 7.1 8.1 4.3-1.4 7.1-4.1 7.1-8.1V2.7C12.6 2.7 10.2 2.1 8 .7z" fill="url(#og)" stroke="#ea8a22" stroke-width="1.2"/><path d="M8 4v5.6M8 11v2" stroke="#fff" stroke-width="2.4"/></svg><svg style="left:1380.5px;top:3.2px;width:18px;height:20px;" viewBox="0 0 18 20"><ellipse cx="9" cy="16.6" rx="6" ry="1.8" fill="rgba(0,0,0,.1)"/><circle cx="9" cy="8.5" r="7.7" fill="url(#av)"/><ellipse cx="9.2" cy="5.6" rx="3.5" ry="2.7" fill="rgba(255,255,255,.85)"/></svg><svg style="left:1516.2px;top:5.8px;width:13.4px;height:12.4px;" viewBox="0 0 14 13"><path d="M6 6l6 5.5" stroke="#2383cb" stroke-width="3.2" stroke-linecap="round"/><circle cx="4.4" cy="4.4" r="2.7" fill="none" stroke="#2383cb" stroke-width="2.5"/><path d="M4 4.2L.5 0" stroke="#fff" stroke-width="2.6"/></svg><svg style="left:1569.5px;top:5.5px;width:18px;height:16px;" viewBox="0 0 18 16"><path d="M1.2 1.2h13.2v13.2H1.2z" fill="#fff" stroke="#2383cb" stroke-width="1.9"/><path d="M4 5h4.5M4 8h4.5M4 11h3" stroke="#4a9ad6" stroke-width="1.4"/><path d="M9.8 10.2l2.6 2.7 4.4-5.3" fill="none" stroke="#2383cb" stroke-width="2.1"/></svg></div>
<div class="a gh" style="top:440.4px"><div class="cb" style="left:7.8px;top:6.3px"></div><div class="tri"></div><div class="gn">Demo Join.Me</div><div class="gv" style="left:139.5px"></div><div class="gc" style="left:151.5px">6 computers, 6 online</div><div class="ge">edit</div></div>
<div class="a r" style="top:469.7px"><div class="cb" style="left:14.7px;top:5.8px;width:12.6px;height:12.6px"></div><svg style="left:59.6px;top:4.8px;width:15.7px;height:15.7px;" viewBox="0 0 16 16"><circle cx="8" cy="8" r="7.5" fill="url(#gg)" stroke="#2f9d24" stroke-width="1"/><path d="M4.3 8.4l2.5 2.4 4.9-5.2" fill="none" stroke="#fff" stroke-width="2.4"/></svg><svg style="left:123.2px;top:4.5px;width:19.6px;height:16.2px;" viewBox="0 0 20 16.5"><rect x=".8" y=".8" width="18.4" height="12.2" rx=".4" fill="url(#mb)" stroke="#3d6e9c" stroke-width="1.5"/><path d="M7.2 13.8h5.6v1.5h-5.6z" fill="#2a2a2a"/><path d="M5 15.3h10v1.2h-10z" fill="#a8a8a8"/></svg><a class="n">JM-W10-01</a><span style="left:556.5px">Labeeb</span><a style="left:864.5px">10362</a><svg style="left:973px;top:4.9px;width:18.7px;height:15.2px;color:#2383cb;" viewBox="0 0 19 15.5"><path d="M1.1 1.1h14v9.8h-14z" fill="#fff" stroke="currentColor" stroke-width="2.2" stroke-linejoin="round"/><path d="M4.8 12.6h5" stroke="currentColor" stroke-width="2"/><path d="M11.4 4.2V13.6L14 11.6 15.9 15.3 17.9 14.3 16 10.7 19.2 10.4z" fill="currentColor" stroke="currentColor" stroke-width=".9" stroke-linejoin="round"/></svg><svg style="left:997.2px;top:6.1px;width:16px;height:14px;color:#2383cb;" viewBox="0 0 16 14"><path d="M.8.9h14.4v12.2H.8z" fill="currentColor" fill-opacity=".5" stroke="currentColor" stroke-width="1.6"/><path d="M.8 1.9h14.4" stroke="currentColor" stroke-width="2"/><path d="M2.3 4.6h4.5v3.2H2.3zM9.2 4.6h4.5v3.2H9.2zM2.3 8.9h4.5v3H2.3zM9.2 8.9h4.5v3H9.2z" fill="#fff"/></svg><svg style="left:1019.6px;top:4.4px;width:14.9px;height:14.4px;color:#2383cb;" viewBox="0 0 15 14.5"><path d="M7.5 0L-.3 7.4h2.2v7h4V9.6h3.2v4.8h4v-7h2.2L12.9 5.2V.9h-2.4v2z" fill="currentColor"/></svg><span style="left:1072.5px">Online</span><svg style="left:1247px;top:6px;width:15.5px;height:13.5px;" viewBox="0 0 16 14"><path d="M.6.6h14.8v8.8l-4 4H.6z" fill="#1a7cc8" stroke="#1a7cc8" stroke-width="1.2"/><path d="M11.2 13.2V9.2h4z" fill="#9acbee"/><path d="M4 5h7.5M4 8h4.5" stroke="#7dbdea" stroke-width="1.5"/></svg><svg style="left:1313.5px;top:4.3px;width:15.9px;height:16.9px;" viewBox="0 0 16 17"><path d="M8 .7C5.8 2.1 3.4 2.7.9 2.7v5.5c0 4 2.8 6.7 7.1 8.1 4.3-1.4 7.1-4.1 7.1-8.1V2.7C12.6 2.7 10.2 2.1 8 .7z" fill="url(#sg)" stroke="#1f861c" stroke-width="1.2"/><path d="M4.3 8.3l2.7 2.6 4.7-5.2" fill="none" stroke="#fff" stroke-width="2.7"/></svg><svg style="left:1380.5px;top:3.2px;width:18px;height:20px;" viewBox="0 0 18 20"><ellipse cx="9" cy="16.6" rx="6" ry="1.8" fill="rgba(0,0,0,.1)"/><circle cx="9" cy="8.5" r="7.7" fill="url(#av)"/><ellipse cx="9.2" cy="5.6" rx="3.5" ry="2.7" fill="rgba(255,255,255,.85)"/></svg><svg style="left:1516.2px;top:5.8px;width:13.4px;height:12.4px;" viewBox="0 0 14 13"><path d="M6 6l6 5.5" stroke="#2383cb" stroke-width="3.2" stroke-linecap="round"/><circle cx="4.4" cy="4.4" r="2.7" fill="none" stroke="#2383cb" stroke-width="2.5"/><path d="M4 4.2L.5 0" stroke="#fff" stroke-width="2.6"/></svg><svg style="left:1569.5px;top:5.5px;width:18px;height:16px;" viewBox="0 0 18 16"><path d="M1.2 1.2h13.2v13.2H1.2z" fill="#fff" stroke="#2383cb" stroke-width="1.9"/><path d="M4 5h4.5M4 8h4.5M4 11h3" stroke="#4a9ad6" stroke-width="1.4"/><path d="M9.8 10.2l2.6 2.7 4.4-5.3" fill="none" stroke="#2383cb" stroke-width="2.1"/></svg></div>
<div class="a r" style="top:494.87px"><div class="cb" style="left:14.7px;top:5.8px;width:12.6px;height:12.6px"></div><svg style="left:59.6px;top:4.8px;width:15.7px;height:15.7px;" viewBox="0 0 16 16"><circle cx="8" cy="8" r="7.5" fill="url(#gg)" stroke="#2f9d24" stroke-width="1"/><path d="M4.3 8.4l2.5 2.4 4.9-5.2" fill="none" stroke="#fff" stroke-width="2.4"/></svg><svg style="left:123.2px;top:4.5px;width:19.6px;height:16.2px;" viewBox="0 0 20 16.5"><rect x=".8" y=".8" width="18.4" height="12.2" rx=".4" fill="url(#mb)" stroke="#3d6e9c" stroke-width="1.5"/><path d="M7.2 13.8h5.6v1.5h-5.6z" fill="#2a2a2a"/><path d="M5 15.3h10v1.2h-10z" fill="#a8a8a8"/></svg><a class="n">JM-W10-02</a><a style="left:864.5px">10362</a><svg style="left:973px;top:4.9px;width:18.7px;height:15.2px;color:#2383cb;" viewBox="0 0 19 15.5"><path d="M1.1 1.1h14v9.8h-14z" fill="#fff" stroke="currentColor" stroke-width="2.2" stroke-linejoin="round"/><path d="M4.8 12.6h5" stroke="currentColor" stroke-width="2"/><path d="M11.4 4.2V13.6L14 11.6 15.9 15.3 17.9 14.3 16 10.7 19.2 10.4z" fill="currentColor" stroke="currentColor" stroke-width=".9" stroke-linejoin="round"/></svg><svg style="left:997.2px;top:6.1px;width:16px;height:14px;color:#2383cb;" viewBox="0 0 16 14"><path d="M.8.9h14.4v12.2H.8z" fill="currentColor" fill-opacity=".5" stroke="currentColor" stroke-width="1.6"/><path d="M.8 1.9h14.4" stroke="currentColor" stroke-width="2"/><path d="M2.3 4.6h4.5v3.2H2.3zM9.2 4.6h4.5v3.2H9.2zM2.3 8.9h4.5v3H2.3zM9.2 8.9h4.5v3H9.2z" fill="#fff"/></svg><svg style="left:1019.6px;top:4.4px;width:14.9px;height:14.4px;color:#2383cb;" viewBox="0 0 15 14.5"><path d="M7.5 0L-.3 7.4h2.2v7h4V9.6h3.2v4.8h4v-7h2.2L12.9 5.2V.9h-2.4v2z" fill="currentColor"/></svg><span style="left:1072.5px">Online</span><svg style="left:1247px;top:6px;width:15.5px;height:13.5px;" viewBox="0 0 16 14"><path d="M1.1 1.1h13.8v8.2L11.2 12.9H1.1z" fill="#fff" stroke="#2383cb" stroke-width="2"/><path d="M11 13V9.2h3.8" fill="none" stroke="#8cc4ea" stroke-width="1.2"/></svg><svg style="left:1313.5px;top:4.3px;width:15.9px;height:16.9px;" viewBox="0 0 16 17"><path d="M8 .7C5.8 2.1 3.4 2.7.9 2.7v5.5c0 4 2.8 6.7 7.1 8.1 4.3-1.4 7.1-4.1 7.1-8.1V2.7C12.6 2.7 10.2 2.1 8 .7z" fill="url(#sg)" stroke="#1f861c" stroke-width="1.2"/><path d="M4.3 8.3l2.7 2.6 4.7-5.2" fill="none" stroke="#fff" stroke-width="2.7"/></svg><svg style="left:1380.5px;top:3.2px;width:18px;height:20px;" viewBox="0 0 18 20"><ellipse cx="9" cy="16.6" rx="6" ry="1.8" fill="rgba(0,0,0,.1)"/><circle cx="9" cy="8.5" r="7.7" fill="url(#av)"/><ellipse cx="9.2" cy="5.6" rx="3.5" ry="2.7" fill="rgba(255,255,255,.85)"/></svg><svg style="left:1516.2px;top:5.8px;width:13.4px;height:12.4px;" viewBox="0 0 14 13"><path d="M6 6l6 5.5" stroke="#2383cb" stroke-width="3.2" stroke-linecap="round"/><circle cx="4.4" cy="4.4" r="2.7" fill="none" stroke="#2383cb" stroke-width="2.5"/><path d="M4 4.2L.5 0" stroke="#fff" stroke-width="2.6"/></svg><svg style="left:1569.5px;top:5.5px;width:18px;height:16px;" viewBox="0 0 18 16"><path d="M1.2 1.2h13.2v13.2H1.2z" fill="#fff" stroke="#2383cb" stroke-width="1.9"/><path d="M4 5h4.5M4 8h4.5M4 11h3" stroke="#4a9ad6" stroke-width="1.4"/><path d="M9.8 10.2l2.6 2.7 4.4-5.3" fill="none" stroke="#2383cb" stroke-width="2.1"/></svg></div>
<div class="a r" style="top:520.04px"><div class="cb" style="left:14.7px;top:5.8px;width:12.6px;height:12.6px"></div><svg style="left:58.6px;top:4.6px;width:16.6px;height:15.6px;" viewBox="0 0 18 16"><path d="M9 1.2L17 15H1z" fill="url(#og)" stroke="#ee8216" stroke-width="1.6" stroke-linejoin="round"/><path d="M9 5.2v5.2M9 11.8v1.9" stroke="#fff" stroke-width="2.2"/></svg><svg style="left:123.2px;top:4.5px;width:19.6px;height:16.2px;" viewBox="0 0 20 16.5"><rect x=".8" y=".8" width="18.4" height="12.2" rx=".4" fill="url(#mb)" stroke="#3d6e9c" stroke-width="1.5"/><path d="M7.2 13.8h5.6v1.5h-5.6z" fill="#2a2a2a"/><path d="M5 15.3h10v1.2h-10z" fill="#a8a8a8"/></svg><a class="n">JM-W7-01</a><a style="left:864.5px">10362</a><svg style="left:973px;top:4.9px;width:18.7px;height:15.2px;color:#2383cb;" viewBox="0 0 19 15.5"><path d="M1.1 1.1h14v9.8h-14z" fill="#fff" stroke="currentColor" stroke-width="2.2" stroke-linejoin="round"/><path d="M4.8 12.6h5" stroke="currentColor" stroke-width="2"/><path d="M11.4 4.2V13.6L14 11.6 15.9 15.3 17.9 14.3 16 10.7 19.2 10.4z" fill="currentColor" stroke="currentColor" stroke-width=".9" stroke-linejoin="round"/></svg><svg style="left:997.2px;top:6.1px;width:16px;height:14px;color:#2383cb;" viewBox="0 0 16 14"><path d="M.8.9h14.4v12.2H.8z" fill="currentColor" fill-opacity=".5" stroke="currentColor" stroke-width="1.6"/><path d="M.8 1.9h14.4" stroke="currentColor" stroke-width="2"/><path d="M2.3 4.6h4.5v3.2H2.3zM9.2 4.6h4.5v3.2H9.2zM2.3 8.9h4.5v3H2.3zM9.2 8.9h4.5v3H9.2z" fill="#fff"/></svg><svg style="left:1019.6px;top:4.4px;width:14.9px;height:14.4px;color:#2383cb;" viewBox="0 0 15 14.5"><path d="M7.5 0L-.3 7.4h2.2v7h4V9.6h3.2v4.8h4v-7h2.2L12.9 5.2V.9h-2.4v2z" fill="currentColor"/></svg><span style="left:1072.5px">Online</span><svg style="left:1247px;top:6px;width:15.5px;height:13.5px;" viewBox="0 0 16 14"><path d="M1.1 1.1h13.8v8.2L11.2 12.9H1.1z" fill="#fff" stroke="#2383cb" stroke-width="2"/><path d="M11 13V9.2h3.8" fill="none" stroke="#8cc4ea" stroke-width="1.2"/></svg><svg style="left:1313.5px;top:4.3px;width:15.9px;height:16.9px;" viewBox="0 0 16 17"><path d="M8 .7C5.8 2.1 3.4 2.7.9 2.7v5.5c0 4 2.8 6.7 7.1 8.1 4.3-1.4 7.1-4.1 7.1-8.1V2.7C12.6 2.7 10.2 2.1 8 .7z" fill="url(#og)" stroke="#ea8a22" stroke-width="1.2"/><path d="M8 4v5.6M8 11v2" stroke="#fff" stroke-width="2.4"/></svg><svg style="left:1380.5px;top:3.2px;width:18px;height:20px;" viewBox="0 0 18 20"><ellipse cx="9" cy="16.6" rx="6" ry="1.8" fill="rgba(0,0,0,.1)"/><circle cx="9" cy="8.5" r="7.7" fill="url(#av)"/><ellipse cx="9.2" cy="5.6" rx="3.5" ry="2.7" fill="rgba(255,255,255,.85)"/></svg><svg style="left:1516.2px;top:5.8px;width:13.4px;height:12.4px;" viewBox="0 0 14 13"><path d="M6 6l6 5.5" stroke="#2383cb" stroke-width="3.2" stroke-linecap="round"/><circle cx="4.4" cy="4.4" r="2.7" fill="none" stroke="#2383cb" stroke-width="2.5"/><path d="M4 4.2L.5 0" stroke="#fff" stroke-width="2.6"/></svg><svg style="left:1569.5px;top:5.5px;width:18px;height:16px;" viewBox="0 0 18 16"><path d="M1.2 1.2h13.2v13.2H1.2z" fill="#fff" stroke="#2383cb" stroke-width="1.9"/><path d="M4 5h4.5M4 8h4.5M4 11h3" stroke="#4a9ad6" stroke-width="1.4"/><path d="M9.8 10.2l2.6 2.7 4.4-5.3" fill="none" stroke="#2383cb" stroke-width="2.1"/></svg></div>
<div class="a r" style="top:545.21px"><div class="cb" style="left:14.7px;top:5.8px;width:12.6px;height:12.6px"></div><svg style="left:59.6px;top:4.8px;width:15.7px;height:15.7px;" viewBox="0 0 16 16"><circle cx="8" cy="8" r="7.5" fill="url(#gg)" stroke="#2f9d24" stroke-width="1"/><path d="M4.3 8.4l2.5 2.4 4.9-5.2" fill="none" stroke="#fff" stroke-width="2.4"/></svg><svg style="left:123.2px;top:4.5px;width:19.6px;height:16.2px;" viewBox="0 0 20 16.5"><rect x=".8" y=".8" width="18.4" height="12.2" rx=".4" fill="url(#mb)" stroke="#3d6e9c" stroke-width="1.5"/><path d="M7.2 13.8h5.6v1.5h-5.6z" fill="#2a2a2a"/><path d="M5 15.3h10v1.2h-10z" fill="#a8a8a8"/></svg><a class="n">JM-W7-02</a><a style="left:864.5px">10362</a><svg style="left:973px;top:4.9px;width:18.7px;height:15.2px;color:#2383cb;" viewBox="0 0 19 15.5"><path d="M1.1 1.1h14v9.8h-14z" fill="#fff" stroke="currentColor" stroke-width="2.2" stroke-linejoin="round"/><path d="M4.8 12.6h5" stroke="currentColor" stroke-width="2"/><path d="M11.4 4.2V13.6L14 11.6 15.9 15.3 17.9 14.3 16 10.7 19.2 10.4z" fill="currentColor" stroke="currentColor" stroke-width=".9" stroke-linejoin="round"/></svg><svg style="left:997.2px;top:6.1px;width:16px;height:14px;color:#2383cb;" viewBox="0 0 16 14"><path d="M.8.9h14.4v12.2H.8z" fill="currentColor" fill-opacity=".5" stroke="currentColor" stroke-width="1.6"/><path d="M.8 1.9h14.4" stroke="currentColor" stroke-width="2"/><path d="M2.3 4.6h4.5v3.2H2.3zM9.2 4.6h4.5v3.2H9.2zM2.3 8.9h4.5v3H2.3zM9.2 8.9h4.5v3H9.2z" fill="#fff"/></svg><svg style="left:1019.6px;top:4.4px;width:14.9px;height:14.4px;color:#2383cb;" viewBox="0 0 15 14.5"><path d="M7.5 0L-.3 7.4h2.2v7h4V9.6h3.2v4.8h4v-7h2.2L12.9 5.2V.9h-2.4v2z" fill="currentColor"/></svg><span style="left:1072.5px">Online</span><svg style="left:1247px;top:6px;width:15.5px;height:13.5px;" viewBox="0 0 16 14"><path d="M1.1 1.1h13.8v8.2L11.2 12.9H1.1z" fill="#fff" stroke="#2383cb" stroke-width="2"/><path d="M11 13V9.2h3.8" fill="none" stroke="#8cc4ea" stroke-width="1.2"/></svg><svg style="left:1313.5px;top:4.3px;width:15.9px;height:16.9px;" viewBox="0 0 16 17"><path d="M8 .7C5.8 2.1 3.4 2.7.9 2.7v5.5c0 4 2.8 6.7 7.1 8.1 4.3-1.4 7.1-4.1 7.1-8.1V2.7C12.6 2.7 10.2 2.1 8 .7z" fill="url(#sg)" stroke="#1f861c" stroke-width="1.2"/><path d="M4.3 8.3l2.7 2.6 4.7-5.2" fill="none" stroke="#fff" stroke-width="2.7"/></svg><svg style="left:1380.5px;top:3.2px;width:18px;height:20px;" viewBox="0 0 18 20"><ellipse cx="9" cy="16.6" rx="6" ry="1.8" fill="rgba(0,0,0,.1)"/><circle cx="9" cy="8.5" r="7.7" fill="url(#av)"/><ellipse cx="9.2" cy="5.6" rx="3.5" ry="2.7" fill="rgba(255,255,255,.85)"/></svg><svg style="left:1516.2px;top:5.8px;width:13.4px;height:12.4px;" viewBox="0 0 14 13"><path d="M6 6l6 5.5" stroke="#2383cb" stroke-width="3.2" stroke-linecap="round"/><circle cx="4.4" cy="4.4" r="2.7" fill="none" stroke="#2383cb" stroke-width="2.5"/><path d="M4 4.2L.5 0" stroke="#fff" stroke-width="2.6"/></svg><svg style="left:1569.5px;top:5.5px;width:18px;height:16px;" viewBox="0 0 18 16"><path d="M1.2 1.2h13.2v13.2H1.2z" fill="#fff" stroke="#2383cb" stroke-width="1.9"/><path d="M4 5h4.5M4 8h4.5M4 11h3" stroke="#4a9ad6" stroke-width="1.4"/><path d="M9.8 10.2l2.6 2.7 4.4-5.3" fill="none" stroke="#2383cb" stroke-width="2.1"/></svg></div>
<div class="a r" style="top:570.38px"><div class="cb" style="left:14.7px;top:5.8px;width:12.6px;height:12.6px"></div><svg style="left:58.6px;top:4.6px;width:16.6px;height:15.6px;" viewBox="0 0 18 16"><path d="M9 1.2L17 15H1z" fill="url(#og)" stroke="#ee8216" stroke-width="1.6" stroke-linejoin="round"/><path d="M9 5.2v5.2M9 11.8v1.9" stroke="#fff" stroke-width="2.2"/></svg><svg style="left:123.2px;top:4.5px;width:19.6px;height:16.2px;" viewBox="0 0 20 16.5"><rect x=".8" y=".8" width="18.4" height="12.2" rx=".4" fill="url(#mb)" stroke="#3d6e9c" stroke-width="1.5"/><path d="M7.2 13.8h5.6v1.5h-5.6z" fill="#2a2a2a"/><path d="M5 15.3h10v1.2h-10z" fill="#a8a8a8"/></svg><a class="n">JM-W8-01</a><a style="left:864.5px">10362</a><svg style="left:973px;top:4.9px;width:18.7px;height:15.2px;color:#2383cb;" viewBox="0 0 19 15.5"><path d="M1.1 1.1h14v9.8h-14z" fill="#fff" stroke="currentColor" stroke-width="2.2" stroke-linejoin="round"/><path d="M4.8 12.6h5" stroke="currentColor" stroke-width="2"/><path d="M11.4 4.2V13.6L14 11.6 15.9 15.3 17.9 14.3 16 10.7 19.2 10.4z" fill="currentColor" stroke="currentColor" stroke-width=".9" stroke-linejoin="round"/></svg><svg style="left:997.2px;top:6.1px;width:16px;height:14px;color:#2383cb;" viewBox="0 0 16 14"><path d="M.8.9h14.4v12.2H.8z" fill="currentColor" fill-opacity=".5" stroke="currentColor" stroke-width="1.6"/><path d="M.8 1.9h14.4" stroke="currentColor" stroke-width="2"/><path d="M2.3 4.6h4.5v3.2H2.3zM9.2 4.6h4.5v3.2H9.2zM2.3 8.9h4.5v3H2.3zM9.2 8.9h4.5v3H9.2z" fill="#fff"/></svg><svg style="left:1019.6px;top:4.4px;width:14.9px;height:14.4px;color:#2383cb;" viewBox="0 0 15 14.5"><path d="M7.5 0L-.3 7.4h2.2v7h4V9.6h3.2v4.8h4v-7h2.2L12.9 5.2V.9h-2.4v2z" fill="currentColor"/></svg><span style="left:1072.5px">Online</span><svg style="left:1247px;top:6px;width:15.5px;height:13.5px;" viewBox="0 0 16 14"><path d="M1.1 1.1h13.8v8.2L11.2 12.9H1.1z" fill="#fff" stroke="#2383cb" stroke-width="2"/><path d="M11 13V9.2h3.8" fill="none" stroke="#8cc4ea" stroke-width="1.2"/></svg><svg style="left:1313.5px;top:4.3px;width:15.9px;height:16.9px;" viewBox="0 0 16 17"><path d="M8 .7C5.8 2.1 3.4 2.7.9 2.7v5.5c0 4 2.8 6.7 7.1 8.1 4.3-1.4 7.1-4.1 7.1-8.1V2.7C12.6 2.7 10.2 2.1 8 .7z" fill="url(#og)" stroke="#ea8a22" stroke-width="1.2"/><path d="M8 4v5.6M8 11v2" stroke="#fff" stroke-width="2.4"/></svg><svg style="left:1380.5px;top:3.2px;width:18px;height:20px;" viewBox="0 0 18 20"><ellipse cx="9" cy="16.6" rx="6" ry="1.8" fill="rgba(0,0,0,.1)"/><circle cx="9" cy="8.5" r="7.7" fill="url(#av)"/><ellipse cx="9.2" cy="5.6" rx="3.5" ry="2.7" fill="rgba(255,255,255,.85)"/></svg><svg style="left:1516.2px;top:5.8px;width:13.4px;height:12.4px;" viewBox="0 0 14 13"><path d="M6 6l6 5.5" stroke="#2383cb" stroke-width="3.2" stroke-linecap="round"/><circle cx="4.4" cy="4.4" r="2.7" fill="none" stroke="#2383cb" stroke-width="2.5"/><path d="M4 4.2L.5 0" stroke="#fff" stroke-width="2.6"/></svg><svg style="left:1569.5px;top:5.5px;width:18px;height:16px;" viewBox="0 0 18 16"><path d="M1.2 1.2h13.2v13.2H1.2z" fill="#fff" stroke="#2383cb" stroke-width="1.9"/><path d="M4 5h4.5M4 8h4.5M4 11h3" stroke="#4a9ad6" stroke-width="1.4"/><path d="M9.8 10.2l2.6 2.7 4.4-5.3" fill="none" stroke="#2383cb" stroke-width="2.1"/></svg></div>
<div class="a r" style="top:595.55px"><div class="cb" style="left:14.7px;top:5.8px;width:12.6px;height:12.6px"></div><svg style="left:58.6px;top:4.6px;width:16.6px;height:15.6px;" viewBox="0 0 18 16"><path d="M9 1.2L17 15H1z" fill="url(#og)" stroke="#ee8216" stroke-width="1.6" stroke-linejoin="round"/><path d="M9 5.2v5.2M9 11.8v1.9" stroke="#fff" stroke-width="2.2"/></svg><svg style="left:123.2px;top:4.5px;width:19.6px;height:16.2px;" viewBox="0 0 20 16.5"><rect x=".8" y=".8" width="18.4" height="12.2" rx=".4" fill="url(#mb)" stroke="#3d6e9c" stroke-width="1.5"/><path d="M7.2 13.8h5.6v1.5h-5.6z" fill="#2a2a2a"/><path d="M5 15.3h10v1.2h-10z" fill="#a8a8a8"/></svg><a class="n">JM-W8-02</a><a style="left:864.5px">10622</a><svg style="left:973px;top:4.9px;width:18.7px;height:15.2px;color:#2383cb;" viewBox="0 0 19 15.5"><path d="M1.1 1.1h14v9.8h-14z" fill="#fff" stroke="currentColor" stroke-width="2.2" stroke-linejoin="round"/><path d="M4.8 12.6h5" stroke="currentColor" stroke-width="2"/><path d="M11.4 4.2V13.6L14 11.6 15.9 15.3 17.9 14.3 16 10.7 19.2 10.4z" fill="currentColor" stroke="currentColor" stroke-width=".9" stroke-linejoin="round"/></svg><svg style="left:997.2px;top:6.1px;width:16px;height:14px;color:#2383cb;" viewBox="0 0 16 14"><path d="M.8.9h14.4v12.2H.8z" fill="currentColor" fill-opacity=".5" stroke="currentColor" stroke-width="1.6"/><path d="M.8 1.9h14.4" stroke="currentColor" stroke-width="2"/><path d="M2.3 4.6h4.5v3.2H2.3zM9.2 4.6h4.5v3.2H9.2zM2.3 8.9h4.5v3H2.3zM9.2 8.9h4.5v3H9.2z" fill="#fff"/></svg><svg style="left:1019.6px;top:4.4px;width:14.9px;height:14.4px;color:#2383cb;" viewBox="0 0 15 14.5"><path d="M7.5 0L-.3 7.4h2.2v7h4V9.6h3.2v4.8h4v-7h2.2L12.9 5.2V.9h-2.4v2z" fill="currentColor"/></svg><span style="left:1072.5px">Online</span><svg style="left:1247px;top:6px;width:15.5px;height:13.5px;" viewBox="0 0 16 14"><path d="M1.1 1.1h13.8v8.2L11.2 12.9H1.1z" fill="#fff" stroke="#2383cb" stroke-width="2"/><path d="M11 13V9.2h3.8" fill="none" stroke="#8cc4ea" stroke-width="1.2"/></svg><svg style="left:1313.5px;top:4.3px;width:15.9px;height:16.9px;" viewBox="0 0 16 17"><path d="M8 .7C5.8 2.1 3.4 2.7.9 2.7v5.5c0 4 2.8 6.7 7.1 8.1 4.3-1.4 7.1-4.1 7.1-8.1V2.7C12.6 2.7 10.2 2.1 8 .7z" fill="url(#og)" stroke="#ea8a22" stroke-width="1.2"/><path d="M8 4v5.6M8 11v2" stroke="#fff" stroke-width="2.4"/></svg><svg style="left:1380.5px;top:3.2px;width:18px;height:20px;" viewBox="0 0 18 20"><ellipse cx="9" cy="16.6" rx="6" ry="1.8" fill="rgba(0,0,0,.1)"/><circle cx="9" cy="8.5" r="7.7" fill="url(#av)"/><ellipse cx="9.2" cy="5.6" rx="3.5" ry="2.7" fill="rgba(255,255,255,.85)"/></svg><svg style="left:1516.2px;top:5.8px;width:13.4px;height:12.4px;" viewBox="0 0 14 13"><path d="M6 6l6 5.5" stroke="#2383cb" stroke-width="3.2" stroke-linecap="round"/><circle cx="4.4" cy="4.4" r="2.7" fill="none" stroke="#2383cb" stroke-width="2.5"/><path d="M4 4.2L.5 0" stroke="#fff" stroke-width="2.6"/></svg><svg style="left:1569.5px;top:5.5px;width:18px;height:16px;" viewBox="0 0 18 16"><path d="M1.2 1.2h13.2v13.2H1.2z" fill="#fff" stroke="#2383cb" stroke-width="1.9"/><path d="M4 5h4.5M4 8h4.5M4 11h3" stroke="#4a9ad6" stroke-width="1.4"/><path d="M9.8 10.2l2.6 2.7 4.4-5.3" fill="none" stroke="#2383cb" stroke-width="2.1"/></svg></div>
<div class="a gh" style="top:629.05px"><div class="cb" style="left:7.8px;top:6.3px"></div><div class="tri"></div><div class="gn">Demo Kaspersky</div><div class="gv" style="left:156.5px"></div><div class="gc" style="left:169px">11 computers, 10 online</div><div class="ge">edit</div></div>
<div class="a r" style="top:658.35px"><div class="cb" style="left:14.7px;top:5.8px;width:12.6px;height:12.6px"></div><svg style="left:59.6px;top:4.8px;width:15.7px;height:15.7px;" viewBox="0 0 16 16"><circle cx="8" cy="8" r="7.5" fill="url(#gg)" stroke="#2f9d24" stroke-width="1"/><path d="M4.3 8.4l2.5 2.4 4.9-5.2" fill="none" stroke="#fff" stroke-width="2.4"/></svg><svg style="left:123.2px;top:4.5px;width:19.6px;height:16.2px;" viewBox="0 0 20 16.5"><rect x=".8" y=".8" width="18.4" height="12.2" rx=".4" fill="url(#mb)" stroke="#3d6e9c" stroke-width="1.5"/><path d="M7.2 13.8h5.6v1.5h-5.6z" fill="#2a2a2a"/><path d="M5 15.3h10v1.2h-10z" fill="#a8a8a8"/></svg><a class="n">KL-W10-01 (Non Standard KES install)</a><a style="left:864.5px">10622</a><svg style="left:973px;top:4.9px;width:18.7px;height:15.2px;color:#2383cb;" viewBox="0 0 19 15.5"><path d="M1.1 1.1h14v9.8h-14z" fill="#fff" stroke="currentColor" stroke-width="2.2" stroke-linejoin="round"/><path d="M4.8 12.6h5" stroke="currentColor" stroke-width="2"/><path d="M11.4 4.2V13.6L14 11.6 15.9 15.3 17.9 14.3 16 10.7 19.2 10.4z" fill="currentColor" stroke="currentColor" stroke-width=".9" stroke-linejoin="round"/></svg><svg style="left:997.2px;top:6.1px;width:16px;height:14px;color:#2383cb;" viewBox="0 0 16 14"><path d="M.8.9h14.4v12.2H.8z" fill="currentColor" fill-opacity=".5" stroke="currentColor" stroke-width="1.6"/><path d="M.8 1.9h14.4" stroke="currentColor" stroke-width="2"/><path d="M2.3 4.6h4.5v3.2H2.3zM9.2 4.6h4.5v3.2H9.2zM2.3 8.9h4.5v3H2.3zM9.2 8.9h4.5v3H9.2z" fill="#fff"/></svg><svg style="left:1019.6px;top:4.4px;width:14.9px;height:14.4px;color:#2383cb;" viewBox="0 0 15 14.5"><path d="M7.5 0L-.3 7.4h2.2v7h4V9.6h3.2v4.8h4v-7h2.2L12.9 5.2V.9h-2.4v2z" fill="currentColor"/></svg><span style="left:1072.5px">Online</span><svg style="left:1247px;top:6px;width:15.5px;height:13.5px;" viewBox="0 0 16 14"><path d="M1.1 1.1h13.8v8.2L11.2 12.9H1.1z" fill="#fff" stroke="#2383cb" stroke-width="2"/><path d="M11 13V9.2h3.8" fill="none" stroke="#8cc4ea" stroke-width="1.2"/></svg><svg style="left:1313.5px;top:4.3px;width:15.9px;height:16.9px;" viewBox="0 0 16 17"><path d="M8 .7C5.8 2.1 3.4 2.7.9 2.7v5.5c0 4 2.8 6.7 7.1 8.1 4.3-1.4 7.1-4.1 7.1-8.1V2.7C12.6 2.7 10.2 2.1 8 .7z" fill="url(#sg)" stroke="#1f861c" stroke-width="1.2"/><path d="M4.3 8.3l2.7 2.6 4.7-5.2" fill="none" stroke="#fff" stroke-width="2.7"/></svg><svg style="left:1380.5px;top:3.2px;width:18px;height:20px;" viewBox="0 0 18 20"><ellipse cx="9" cy="16.6" rx="6" ry="1.8" fill="rgba(0,0,0,.1)"/><circle cx="9" cy="8.5" r="7.7" fill="url(#av)"/><ellipse cx="9.2" cy="5.6" rx="3.5" ry="2.7" fill="rgba(255,255,255,.85)"/></svg><svg style="left:1516.2px;top:5.8px;width:13.4px;height:12.4px;" viewBox="0 0 14 13"><path d="M6 6l6 5.5" stroke="#2383cb" stroke-width="3.2" stroke-linecap="round"/><circle cx="4.4" cy="4.4" r="2.7" fill="none" stroke="#2383cb" stroke-width="2.5"/><path d="M4 4.2L.5 0" stroke="#fff" stroke-width="2.6"/></svg><svg style="left:1569.5px;top:5.5px;width:18px;height:16px;" viewBox="0 0 18 16"><path d="M1.2 1.2h13.2v13.2H1.2z" fill="#fff" stroke="#2383cb" stroke-width="1.9"/><path d="M4 5h4.5M4 8h4.5M4 11h3" stroke="#4a9ad6" stroke-width="1.4"/><path d="M9.8 10.2l2.6 2.7 4.4-5.3" fill="none" stroke="#2383cb" stroke-width="2.1"/></svg></div>
<div class="a r" style="top:683.52px"><div class="cb" style="left:14.7px;top:5.8px;width:12.6px;height:12.6px"></div><svg style="left:59.6px;top:4.8px;width:15.7px;height:15.7px;" viewBox="0 0 16 16"><circle cx="8" cy="8" r="7.5" fill="url(#gg)" stroke="#2f9d24" stroke-width="1"/><path d="M4.3 8.4l2.5 2.4 4.9-5.2" fill="none" stroke="#fff" stroke-width="2.4"/></svg><svg style="left:123.2px;top:4.5px;width:19.6px;height:16.2px;" viewBox="0 0 20 16.5"><rect x=".8" y=".8" width="18.4" height="12.2" rx=".4" fill="url(#mg)" stroke="#adadad" stroke-width="1.5"/><path d="M7.2 13.8h5.6v1.5h-5.6z" fill="#858585"/><path d="M5 15.3h10v1.2h-10z" fill="#d0d0d0"/></svg><span class="n">KL-W10-02 (Test comp, you can touch, don't lick!)</span><a style="left:864.5px">10362</a><svg style="left:973px;top:4.9px;width:18.7px;height:15.2px;color:#c4c4c4;" viewBox="0 0 19 15.5"><path d="M1.1 1.1h14v9.8h-14z" fill="#fff" stroke="currentColor" stroke-width="2.2" stroke-linejoin="round"/><path d="M4.8 12.6h5" stroke="currentColor" stroke-width="2"/><path d="M11.4 4.2V13.6L14 11.6 15.9 15.3 17.9 14.3 16 10.7 19.2 10.4z" fill="currentColor" stroke="currentColor" stroke-width=".9" stroke-linejoin="round"/></svg><svg style="left:997.2px;top:6.1px;width:16px;height:14px;color:#c4c4c4;" viewBox="0 0 16 14"><path d="M.8.9h14.4v12.2H.8z" fill="currentColor" fill-opacity=".5" stroke="currentColor" stroke-width="1.6"/><path d="M.8 1.9h14.4" stroke="currentColor" stroke-width="2"/><path d="M2.3 4.6h4.5v3.2H2.3zM9.2 4.6h4.5v3.2H9.2zM2.3 8.9h4.5v3H2.3zM9.2 8.9h4.5v3H9.2z" fill="#fff"/></svg><svg style="left:1019.6px;top:4.4px;width:14.9px;height:14.4px;color:#c4c4c4;" viewBox="0 0 15 14.5"><path d="M7.5 0L-.3 7.4h2.2v7h4V9.6h3.2v4.8h4v-7h2.2L12.9 5.2V.9h-2.4v2z" fill="currentColor"/></svg><span style="left:1072.5px">11/22/2017 4:00 PM</span><svg style="left:1247px;top:6px;width:15.5px;height:13.5px;" viewBox="0 0 16 14"><path d="M.6.6h14.8v8.8l-4 4H.6z" fill="#1a7cc8" stroke="#1a7cc8" stroke-width="1.2"/><path d="M11.2 13.2V9.2h4z" fill="#9acbee"/><path d="M4 5h7.5M4 8h4.5" stroke="#7dbdea" stroke-width="1.5"/></svg><svg style="left:1313.5px;top:4.3px;width:15.9px;height:16.9px;" viewBox="0 0 16 17"><path d="M8 .7C5.8 2.1 3.4 2.7.9 2.7v5.5c0 4 2.8 6.7 7.1 8.1 4.3-1.4 7.1-4.1 7.1-8.1V2.7C12.6 2.7 10.2 2.1 8 .7z" fill="url(#sg)" stroke="#1f861c" stroke-width="1.2"/><path d="M4.3 8.3l2.7 2.6 4.7-5.2" fill="none" stroke="#fff" stroke-width="2.7"/></svg><svg style="left:1380.5px;top:3.2px;width:18px;height:20px;" viewBox="0 0 18 20"><ellipse cx="9" cy="16.6" rx="6" ry="1.8" fill="rgba(0,0,0,.1)"/><circle cx="9" cy="8.5" r="7.7" fill="url(#av)"/><ellipse cx="9.2" cy="5.6" rx="3.5" ry="2.7" fill="rgba(255,255,255,.85)"/></svg><svg style="left:1516.2px;top:5.8px;width:13.4px;height:12.4px;" viewBox="0 0 14 13"><path d="M6 6l6 5.5" stroke="#2383cb" stroke-width="3.2" stroke-linecap="round"/><circle cx="4.4" cy="4.4" r="2.7" fill="none" stroke="#2383cb" stroke-width="2.5"/><path d="M4 4.2L.5 0" stroke="#fff" stroke-width="2.6"/></svg><svg style="left:1569.5px;top:5.5px;width:18px;height:16px;" viewBox="0 0 18 16"><path d="M1.2 1.2h13.2v13.2H1.2z" fill="#fff" stroke="#2383cb" stroke-width="1.9"/><path d="M4 5h4.5M4 8h4.5M4 11h3" stroke="#4a9ad6" stroke-width="1.4"/><path d="M9.8 10.2l2.6 2.7 4.4-5.3" fill="none" stroke="#2383cb" stroke-width="2.1"/></svg></div>
<div class="a r" style="top:708.69px"><div class="cb" style="left:14.7px;top:5.8px;width:12.6px;height:12.6px"></div><svg style="left:59.6px;top:4.8px;width:15.7px;height:15.7px;" viewBox="0 0 16 16"><circle cx="8" cy="8" r="7.5" fill="url(#gg)" stroke="#2f9d24" stroke-width="1"/><path d="M4.3 8.4l2.5 2.4 4.9-5.2" fill="none" stroke="#fff" stroke-width="2.4"/></svg><svg style="left:123.2px;top:4.5px;width:19.6px;height:16.2px;" viewBox="0 0 20 16.5"><rect x=".8" y=".8" width="18.4" height="12.2" rx=".4" fill="url(#mb)" stroke="#3d6e9c" stroke-width="1.5"/><path d="M7.2 13.8h5.6v1.5h-5.6z" fill="#2a2a2a"/><path d="M5 15.3h10v1.2h-10z" fill="#a8a8a8"/></svg><a class="n">KL-W10-03</a><a style="left:864.5px">10622</a><svg style="left:973px;top:4.9px;width:18.7px;height:15.2px;color:#2383cb;" viewBox="0 0 19 15.5"><path d="M1.1 1.1h14v9.8h-14z" fill="#fff" stroke="currentColor" stroke-width="2.2" stroke-linejoin="round"/><path d="M4.8 12.6h5" stroke="currentColor" stroke-width="2"/><path d="M11.4 4.2V13.6L14 11.6 15.9 15.3 17.9 14.3 16 10.7 19.2 10.4z" fill="currentColor" stroke="currentColor" stroke-width=".9" stroke-linejoin="round"/></svg><svg style="left:997.2px;top:6.1px;width:16px;height:14px;color:#2383cb;" viewBox="0 0 16 14"><path d="M.8.9h14.4v12.2H.8z" fill="currentColor" fill-opacity=".5" stroke="currentColor" stroke-width="1.6"/><path d="M.8 1.9h14.4" stroke="currentColor" stroke-width="2"/><path d="M2.3 4.6h4.5v3.2H2.3zM9.2 4.6h4.5v3.2H9.2zM2.3 8.9h4.5v3H2.3zM9.2 8.9h4.5v3H9.2z" fill="#fff"/></svg><svg style="left:1019.6px;top:4.4px;width:14.9px;height:14.4px;color:#2383cb;" viewBox="0 0 15 14.5"><path d="M7.5 0L-.3 7.4h2.2v7h4V9.6h3.2v4.8h4v-7h2.2L12.9 5.2V.9h-2.4v2z" fill="currentColor"/></svg><span style="left:1072.5px">Online</span><svg style="left:1247px;top:6px;width:15.5px;height:13.5px;" viewBox="0 0 16 14"><path d="M.6.6h14.8v8.8l-4 4H.6z" fill="#1a7cc8" stroke="#1a7cc8" stroke-width="1.2"/><path d="M11.2 13.2V9.2h4z" fill="#9acbee"/><path d="M4 5h7.5M4 8h4.5" stroke="#7dbdea" stroke-width="1.5"/></svg><svg style="left:1313.5px;top:4.3px;width:15.9px;height:16.9px;" viewBox="0 0 16 17"><path d="M8 .7C5.8 2.1 3.4 2.7.9 2.7v5.5c0 4 2.8 6.7 7.1 8.1 4.3-1.4 7.1-4.1 7.1-8.1V2.7C12.6 2.7 10.2 2.1 8 .7z" fill="url(#sg)" stroke="#1f861c" stroke-width="1.2"/><path d="M4.3 8.3l2.7 2.6 4.7-5.2" fill="none" stroke="#fff" stroke-width="2.7"/></svg><svg style="left:1380.5px;top:3.2px;width:18px;height:20px;" viewBox="0 0 18 20"><ellipse cx="9" cy="16.6" rx="6" ry="1.8" fill="rgba(0,0,0,.1)"/><circle cx="9" cy="8.5" r="7.7" fill="url(#av)"/><ellipse cx="9.2" cy="5.6" rx="3.5" ry="2.7" fill="rgba(255,255,255,.85)"/></svg><svg style="left:1516.2px;top:5.8px;width:13.4px;height:12.4px;" viewBox="0 0 14 13"><path d="M6 6l6 5.5" stroke="#2383cb" stroke-width="3.2" stroke-linecap="round"/><circle cx="4.4" cy="4.4" r="2.7" fill="none" stroke="#2383cb" stroke-width="2.5"/><path d="M4 4.2L.5 0" stroke="#fff" stroke-width="2.6"/></svg><svg style="left:1569.5px;top:5.5px;width:18px;height:16px;" viewBox="0 0 18 16"><path d="M1.2 1.2h13.2v13.2H1.2z" fill="#fff" stroke="#2383cb" stroke-width="1.9"/><path d="M4 5h4.5M4 8h4.5M4 11h3" stroke="#4a9ad6" stroke-width="1.4"/><path d="M9.8 10.2l2.6 2.7 4.4-5.3" fill="none" stroke="#2383cb" stroke-width="2.1"/></svg></div>
<div class="a r" style="top:733.86px"><div class="cb" style="left:14.7px;top:5.8px;width:12.6px;height:12.6px"></div><svg style="left:59.6px;top:4.8px;width:15.7px;height:15.7px;" viewBox="0 0 16 16"><circle cx="8" cy="8" r="7.5" fill="url(#gg)" stroke="#2f9d24" stroke-width="1"/><path d="M4.3 8.4l2.5 2.4 4.9-5.2" fill="none" stroke="#fff" stroke-width="2.4"/></svg><svg style="left:123.2px;top:4.5px;width:19.6px;height:16.2px;" viewBox="0 0 20 16.5"><rect x=".8" y=".8" width="18.4" height="12.2" rx=".4" fill="url(#mb)" stroke="#3d6e9c" stroke-width="1.5"/><path d="M7.2 13.8h5.6v1.5h-5.6z" fill="#2a2a2a"/><path d="M5 15.3h10v1.2h-10z" fill="#a8a8a8"/></svg><a class="n">KL-W10-04</a><a style="left:864.5px">10622</a><svg style="left:973px;top:4.9px;width:18.7px;height:15.2px;color:#2383cb;" viewBox="0 0 19 15.5"><path d="M1.1 1.1h14v9.8h-14z" fill="#fff" stroke="currentColor" stroke-width="2.2" stroke-linejoin="round"/><path d="M4.8 12.6h5" stroke="currentColor" stroke-width="2"/><path d="M11.4 4.2V13.6L14 11.6 15.9 15.3 17.9 14.3 16 10.7 19.2 10.4z" fill="currentColor" stroke="currentColor" stroke-width=".9" stroke-linejoin="round"/></svg><svg style="left:997.2px;top:6.1px;width:16px;height:14px;color:#2383cb;" viewBox="0 0 16 14"><path d="M.8.9h14.4v12.2H.8z" fill="currentColor" fill-opacity=".5" stroke="currentColor" stroke-width="1.6"/><path d="M.8 1.9h14.4" stroke="currentColor" stroke-width="2"/><path d="M2.3 4.6h4.5v3.2H2.3zM9.2 4.6h4.5v3.2H9.2zM2.3 8.9h4.5v3H2.3zM9.2 8.9h4.5v3H9.2z" fill="#fff"/></svg><svg style="left:1019.6px;top:4.4px;width:14.9px;height:14.4px;color:#2383cb;" viewBox="0 0 15 14.5"><path d="M7.5 0L-.3 7.4h2.2v7h4V9.6h3.2v4.8h4v-7h2.2L12.9 5.2V.9h-2.4v2z" fill="currentColor"/></svg><span style="left:1072.5px">Online</span><svg style="left:1247px;top:6px;width:15.5px;height:13.5px;" viewBox="0 0 16 14"><path d="M1.1 1.1h13.8v8.2L11.2 12.9H1.1z" fill="#fff" stroke="#2383cb" stroke-width="2"/><path d="M11 13V9.2h3.8" fill="none" stroke="#8cc4ea" stroke-width="1.2"/></svg><svg style="left:1313.5px;top:4.3px;width:15.9px;height:16.9px;" viewBox="0 0 16 17"><path d="M8 .7C5.8 2.1 3.4 2.7.9 2.7v5.5c0 4 2.8 6.7 7.1 8.1 4.3-1.4 7.1-4.1 7.1-8.1V2.7C12.6 2.7 10.2 2.1 8 .7z" fill="url(#sg)" stroke="#1f861c" stroke-width="1.2"/><path d="M4.3 8.3l2.7 2.6 4.7-5.2" fill="none" stroke="#fff" stroke-width="2.7"/></svg><svg style="left:1380.5px;top:3.2px;width:18px;height:20px;" viewBox="0 0 18 20"><ellipse cx="9" cy="16.6" rx="6" ry="1.8" fill="rgba(0,0,0,.1)"/><circle cx="9" cy="8.5" r="7.7" fill="url(#av)"/><ellipse cx="9.2" cy="5.6" rx="3.5" ry="2.7" fill="rgba(255,255,255,.85)"/></svg><svg style="left:1516.2px;top:5.8px;width:13.4px;height:12.4px;" viewBox="0 0 14 13"><path d="M6 6l6 5.5" stroke="#2383cb" stroke-width="3.2" stroke-linecap="round"/><circle cx="4.4" cy="4.4" r="2.7" fill="none" stroke="#2383cb" stroke-width="2.5"/><path d="M4 4.2L.5 0" stroke="#fff" stroke-width="2.6"/></svg><svg style="left:1569.5px;top:5.5px;width:18px;height:16px;" viewBox="0 0 18 16"><path d="M1.2 1.2h13.2v13.2H1.2z" fill="#fff" stroke="#2383cb" stroke-width="1.9"/><path d="M4 5h4.5M4 8h4.5M4 11h3" stroke="#4a9ad6" stroke-width="1.4"/><path d="M9.8 10.2l2.6 2.7 4.4-5.3" fill="none" stroke="#2383cb" stroke-width="2.1"/></svg></div>
<div class="a r" style="top:759.03px"><div class="cb" style="left:14.7px;top:5.8px;width:12.6px;height:12.6px"></div><svg style="left:59.6px;top:4.8px;width:15.7px;height:15.7px;" viewBox="0 0 16 16"><circle cx="8" cy="8" r="7.5" fill="url(#gg)" stroke="#2f9d24" stroke-width="1"/><path d="M4.3 8.4l2.5 2.4 4.9-5.2" fill="none" stroke="#fff" stroke-width="2.4"/></svg><svg style="left:123.2px;top:4.5px;width:19.6px;height:16.2px;" viewBox="0 0 20 16.5"><rect x=".8" y=".8" width="18.4" height="12.2" rx=".4" fill="url(#mb)" stroke="#3d6e9c" stroke-width="1.5"/><path d="M7.2 13.8h5.6v1.5h-5.6z" fill="#2a2a2a"/><path d="M5 15.3h10v1.2h-10z" fill="#a8a8a8"/></svg><a class="n">KL-W10-05</a><a style="left:864.5px">10622</a><svg style="left:973px;top:4.9px;width:18.7px;height:15.2px;color:#2383cb;" viewBox="0 0 19 15.5"><path d="M1.1 1.1h14v9.8h-14z" fill="#fff" stroke="currentColor" stroke-width="2.2" stroke-linejoin="round"/><path d="M4.8 12.6h5" stroke="currentColor" stroke-width="2"/><path d="M11.4 4.2V13.6L14 11.6 15.9 15.3 17.9 14.3 16 10.7 19.2 10.4z" fill="currentColor" stroke="currentColor" stroke-width=".9" stroke-linejoin="round"/></svg><svg style="left:997.2px;top:6.1px;width:16px;height:14px;color:#2383cb;" viewBox="0 0 16 14"><path d="M.8.9h14.4v12.2H.8z" fill="currentColor" fill-opacity=".5" stroke="currentColor" stroke-width="1.6"/><path d="M.8 1.9h14.4" stroke="currentColor" stroke-width="2"/><path d="M2.3 4.6h4.5v3.2H2.3zM9.2 4.6h4.5v3.2H9.2zM2.3 8.9h4.5v3H2.3zM9.2 8.9h4.5v3H9.2z" fill="#fff"/></svg><svg style="left:1019.6px;top:4.4px;width:14.9px;height:14.4px;color:#2383cb;" viewBox="0 0 15 14.5"><path d="M7.5 0L-.3 7.4h2.2v7h4V9.6h3.2v4.8h4v-7h2.2L12.9 5.2V.9h-2.4v2z" fill="currentColor"/></svg><span style="left:1072.5px">Online</span><svg style="left:1247px;top:6px;width:15.5px;height:13.5px;" viewBox="0 0 16 14"><path d="M1.1 1.1h13.8v8.2L11.2 12.9H1.1z" fill="#fff" stroke="#2383cb" stroke-width="2"/><path d="M11 13V9.2h3.8" fill="none" stroke="#8cc4ea" stroke-width="1.2"/></svg><svg style="left:1313.5px;top:4.3px;width:15.9px;height:16.9px;" viewBox="0 0 16 17"><path d="M8 .7C5.8 2.1 3.4 2.7.9 2.7v5.5c0 4 2.8 6.7 7.1 8.1 4.3-1.4 7.1-4.1 7.1-8.1V2.7C12.6 2.7 10.2 2.1 8 .7z" fill="url(#sg)" stroke="#1f861c" stroke-width="1.2"/><path d="M4.3 8.3l2.7 2.6 4.7-5.2" fill="none" stroke="#fff" stroke-width="2.7"/></svg><svg style="left:1380.5px;top:3.2px;width:18px;height:20px;" viewBox="0 0 18 20"><ellipse cx="9" cy="16.6" rx="6" ry="1.8" fill="rgba(0,0,0,.1)"/><circle cx="9" cy="8.5" r="7.7" fill="url(#av)"/><ellipse cx="9.2" cy="5.6" rx="3.5" ry="2.7" fill="rgba(255,255,255,.85)"/></svg><svg style="left:1516.2px;top:5.8px;width:13.4px;height:12.4px;" viewBox="0 0 14 13"><path d="M6 6l6 5.5" stroke="#2383cb" stroke-width="3.2" stroke-linecap="round"/><circle cx="4.4" cy="4.4" r="2.7" fill="none" stroke="#2383cb" stroke-width="2.5"/><path d="M4 4.2L.5 0" stroke="#fff" stroke-width="2.6"/></svg><svg style="left:1569.5px;top:5.5px;width:18px;height:16px;" viewBox="0 0 18 16"><path d="M1.2 1.2h13.2v13.2H1.2z" fill="#fff" stroke="#2383cb" stroke-width="1.9"/><path d="M4 5h4.5M4 8h4.5M4 11h3" stroke="#4a9ad6" stroke-width="1.4"/><path d="M9.8 10.2l2.6 2.7 4.4-5.3" fill="none" stroke="#2383cb" stroke-width="2.1"/></svg></div>
<div class="a r" style="top:784.2px"><div class="cb" style="left:14.7px;top:5.8px;width:12.6px;height:12.6px"></div><svg style="left:58.6px;top:4.6px;width:16.6px;height:15.6px;" viewBox="0 0 18 16"><path d="M9 1.2L17 15H1z" fill="url(#og)" stroke="#ee8216" stroke-width="1.6" stroke-linejoin="round"/><path d="M9 5.2v5.2M9 11.8v1.9" stroke="#fff" stroke-width="2.2"/></svg><svg style="left:123.2px;top:4.5px;width:19.6px;height:16.2px;" viewBox="0 0 20 16.5"><rect x=".8" y=".8" width="18.4" height="12.2" rx=".4" fill="url(#mb)" stroke="#3d6e9c" stroke-width="1.5"/><path d="M7.2 13.8h5.6v1.5h-5.6z" fill="#2a2a2a"/><path d="M5 15.3h10v1.2h-10z" fill="#a8a8a8"/></svg><a class="n">KL-W7-01</a><a style="left:864.5px">10622</a><svg style="left:973px;top:4.9px;width:18.7px;height:15.2px;color:#2383cb;" viewBox="0 0 19 15.5"><path d="M1.1 1.1h14v9.8h-14z" fill="#fff" stroke="currentColor" stroke-width="2.2" stroke-linejoin="round"/><path d="M4.8 12.6h5" stroke="currentColor" stroke-width="2"/><path d="M11.4 4.2V13.6L14 11.6 15.9 15.3 17.9 14.3 16 10.7 19.2 10.4z" fill="currentColor" stroke="currentColor" stroke-width=".9" stroke-linejoin="round"/></svg><svg style="left:997.2px;top:6.1px;width:16px;height:14px;color:#2383cb;" viewBox="0 0 16 14"><path d="M.8.9h14.4v12.2H.8z" fill="currentColor" fill-opacity=".5" stroke="currentColor" stroke-width="1.6"/><path d="M.8 1.9h14.4" stroke="currentColor" stroke-width="2"/><path d="M2.3 4.6h4.5v3.2H2.3zM9.2 4.6h4.5v3.2H9.2zM2.3 8.9h4.5v3H2.3zM9.2 8.9h4.5v3H9.2z" fill="#fff"/></svg><svg style="left:1019.6px;top:4.4px;width:14.9px;height:14.4px;color:#2383cb;" viewBox="0 0 15 14.5"><path d="M7.5 0L-.3 7.4h2.2v7h4V9.6h3.2v4.8h4v-7h2.2L12.9 5.2V.9h-2.4v2z" fill="currentColor"/></svg><span style="left:1072.5px">Online</span><svg style="left:1247px;top:6px;width:15.5px;height:13.5px;" viewBox="0 0 16 14"><path d="M1.1 1.1h13.8v8.2L11.2 12.9H1.1z" fill="#fff" stroke="#2383cb" stroke-width="2"/><path d="M11 13V9.2h3.8" fill="none" stroke="#8cc4ea" stroke-width="1.2"/></svg><svg style="left:1313.5px;top:4.3px;width:15.9px;height:16.9px;" viewBox="0 0 16 17"><path d="M8 .7C5.8 2.1 3.4 2.7.9 2.7v5.5c0 4 2.8 6.7 7.1 8.1 4.3-1.4 7.1-4.1 7.1-8.1V2.7C12.6 2.7 10.2 2.1 8 .7z" fill="url(#og)" stroke="#ea8a22" stroke-width="1.2"/><path d="M8 4v5.6M8 11v2" stroke="#fff" stroke-width="2.4"/></svg><svg style="left:1380.5px;top:3.2px;width:18px;height:20px;" viewBox="0 0 18 20"><ellipse cx="9" cy="16.6" rx="6" ry="1.8" fill="rgba(0,0,0,.1)"/><circle cx="9" cy="8.5" r="7.7" fill="url(#av)"/><ellipse cx="9.2" cy="5.6" rx="3.5" ry="2.7" fill="rgba(255,255,255,.85)"/></svg><svg style="left:1516.2px;top:5.8px;width:13.4px;height:12.4px;" viewBox="0 0 14 13"><path d="M6 6l6 5.5" stroke="#2383cb" stroke-width="3.2" stroke-linecap="round"/><circle cx="4.4" cy="4.4" r="2.7" fill="none" stroke="#2383cb" stroke-width="2.5"/><path d="M4 4.2L.5 0" stroke="#fff" stroke-width="2.6"/></svg><svg style="left:1569.5px;top:5.5px;width:18px;height:16px;" viewBox="0 0 18 16"><path d="M1.2 1.2h13.2v13.2H1.2z" fill="#fff" stroke="#2383cb" stroke-width="1.9"/><path d="M4 5h4.5M4 8h4.5M4 11h3" stroke="#4a9ad6" stroke-width="1.4"/><path d="M9.8 10.2l2.6 2.7 4.4-5.3" fill="none" stroke="#2383cb" stroke-width="2.1"/></svg></div>
<div class="a r" style="top:809.37px"><div class="cb" style="left:14.7px;top:5.8px;width:12.6px;height:12.6px"></div><svg style="left:59.6px;top:4.8px;width:15.7px;height:15.7px;" viewBox="0 0 16 16"><circle cx="8" cy="8" r="7.5" fill="url(#gg)" stroke="#2f9d24" stroke-width="1"/><path d="M4.3 8.4l2.5 2.4 4.9-5.2" fill="none" stroke="#fff" stroke-width="2.4"/></svg><svg style="left:123.2px;top:4.5px;width:19.6px;height:16.2px;" viewBox="0 0 20 16.5"><rect x=".8" y=".8" width="18.4" height="12.2" rx=".4" fill="url(#mb)" stroke="#3d6e9c" stroke-width="1.5"/><path d="M7.2 13.8h5.6v1.5h-5.6z" fill="#2a2a2a"/><path d="M5 15.3h10v1.2h-10z" fill="#a8a8a8"/></svg><a class="n">KL-W7-02</a><a style="left:864.5px">10622</a><svg style="left:973px;top:4.9px;width:18.7px;height:15.2px;color:#2383cb;" viewBox="0 0 19 15.5"><path d="M1.1 1.1h14v9.8h-14z" fill="#fff" stroke="currentColor" stroke-width="2.2" stroke-linejoin="round"/><path d="M4.8 12.6h5" stroke="currentColor" stroke-width="2"/><path d="M11.4 4.2V13.6L14 11.6 15.9 15.3 17.9 14.3 16 10.7 19.2 10.4z" fill="currentColor" stroke="currentColor" stroke-width=".9" stroke-linejoin="round"/></svg><svg style="left:997.2px;top:6.1px;width:16px;height:14px;color:#2383cb;" viewBox="0 0 16 14"><path d="M.8.9h14.4v12.2H.8z" fill="currentColor" fill-opacity=".5" stroke="currentColor" stroke-width="1.6"/><path d="M.8 1.9h14.4" stroke="currentColor" stroke-width="2"/><path d="M2.3 4.6h4.5v3.2H2.3zM9.2 4.6h4.5v3.2H9.2zM2.3 8.9h4.5v3H2.3zM9.2 8.9h4.5v3H9.2z" fill="#fff"/></svg><svg style="left:1019.6px;top:4.4px;width:14.9px;height:14.4px;color:#2383cb;" viewBox="0 0 15 14.5"><path d="M7.5 0L-.3 7.4h2.2v7h4V9.6h3.2v4.8h4v-7h2.2L12.9 5.2V.9h-2.4v2z" fill="currentColor"/></svg><span style="left:1072.5px">Online</span><svg style="left:1247px;top:6px;width:15.5px;height:13.5px;" viewBox="0 0 16 14"><path d="M1.1 1.1h13.8v8.2L11.2 12.9H1.1z" fill="#fff" stroke="#2383cb" stroke-width="2"/><path d="M11 13V9.2h3.8" fill="none" stroke="#8cc4ea" stroke-width="1.2"/></svg><svg style="left:1313.5px;top:4.3px;width:15.9px;height:16.9px;" viewBox="0 0 16 17"><path d="M8 .7C5.8 2.1 3.4 2.7.9 2.7v5.5c0 4 2.8 6.7 7.1 8.1 4.3-1.4 7.1-4.1 7.1-8.1V2.7C12.6 2.7 10.2 2.1 8 .7z" fill="url(#sg)" stroke="#1f861c" stroke-width="1.2"/><path d="M4.3 8.3l2.7 2.6 4.7-5.2" fill="none" stroke="#fff" stroke-width="2.7"/></svg><svg style="left:1380.5px;top:3.2px;width:18px;height:20px;" viewBox="0 0 18 20"><ellipse cx="9" cy="16.6" rx="6" ry="1.8" fill="rgba(0,0,0,.1)"/><circle cx="9" cy="8.5" r="7.7" fill="url(#av)"/><ellipse cx="9.2" cy="5.6" rx="3.5" ry="2.7" fill="rgba(255,255,255,.85)"/></svg><svg style="left:1516.2px;top:5.8px;width:13.4px;height:12.4px;" viewBox="0 0 14 13"><path d="M6 6l6 5.5" stroke="#2383cb" stroke-width="3.2" stroke-linecap="round"/><circle cx="4.4" cy="4.4" r="2.7" fill="none" stroke="#2383cb" stroke-width="2.5"/><path d="M4 4.2L.5 0" stroke="#fff" stroke-width="2.6"/></svg><svg style="left:1569.5px;top:5.5px;width:18px;height:16px;" viewBox="0 0 18 16"><path d="M1.2 1.2h13.2v13.2H1.2z" fill="#fff" stroke="#2383cb" stroke-width="1.9"/><path d="M4 5h4.5M4 8h4.5M4 11h3" stroke="#4a9ad6" stroke-width="1.4"/><path d="M9.8 10.2l2.6 2.7 4.4-5.3" fill="none" stroke="#2383cb" stroke-width="2.1"/></svg></div>
<div class="a r" style="top:834.54px"><div class="cb" style="left:14.7px;top:5.8px;width:12.6px;height:12.6px"></div><svg style="left:59.6px;top:4.8px;width:15.7px;height:15.7px;" viewBox="0 0 16 16"><circle cx="8" cy="8" r="7.5" fill="url(#gg)" stroke="#2f9d24" stroke-width="1"/><path d="M4.3 8.4l2.5 2.4 4.9-5.2" fill="none" stroke="#fff" stroke-width="2.4"/></svg><svg style="left:123.2px;top:4.5px;width:19.6px;height:16.2px;" viewBox="0 0 20 16.5"><rect x=".8" y=".8" width="18.4" height="12.2" rx=".4" fill="url(#mb)" stroke="#3d6e9c" stroke-width="1.5"/><path d="M7.2 13.8h5.6v1.5h-5.6z" fill="#2a2a2a"/><path d="M5 15.3h10v1.2h-10z" fill="#a8a8a8"/></svg><a class="n">KL-W7-03</a><a style="left:864.5px">10622</a><svg style="left:973px;top:4.9px;width:18.7px;height:15.2px;color:#2383cb;" viewBox="0 0 19 15.5"><path d="M1.1 1.1h14v9.8h-14z" fill="#fff" stroke="currentColor" stroke-width="2.2" stroke-linejoin="round"/><path d="M4.8 12.6h5" stroke="currentColor" stroke-width="2"/><path d="M11.4 4.2V13.6L14 11.6 15.9 15.3 17.9 14.3 16 10.7 19.2 10.4z" fill="currentColor" stroke="currentColor" stroke-width=".9" stroke-linejoin="round"/></svg><svg style="left:997.2px;top:6.1px;width:16px;height:14px;color:#2383cb;" viewBox="0 0 16 14"><path d="M.8.9h14.4v12.2H.8z" fill="currentColor" fill-opacity=".5" stroke="currentColor" stroke-width="1.6"/><path d="M.8 1.9h14.4" stroke="currentColor" stroke-width="2"/><path d="M2.3 4.6h4.5v3.2H2.3zM9.2 4.6h4.5v3.2H9.2zM2.3 8.9h4.5v3H2.3zM9.2 8.9h4.5v3H9.2z" fill="#fff"/></svg><svg style="left:1019.6px;top:4.4px;width:14.9px;height:14.4px;color:#2383cb;" viewBox="0 0 15 14.5"><path d="M7.5 0L-.3 7.4h2.2v7h4V9.6h3.2v4.8h4v-7h2.2L12.9 5.2V.9h-2.4v2z" fill="currentColor"/></svg><span style="left:1072.5px">Online</span><svg style="left:1247px;top:6px;width:15.5px;height:13.5px;" viewBox="0 0 16 14"><path d="M1.1 1.1h13.8v8.2L11.2 12.9H1.1z" fill="#fff" stroke="#2383cb" stroke-width="2"/><path d="M11 13V9.2h3.8" fill="none" stroke="#8cc4ea" stroke-width="1.2"/></svg><svg style="left:1313.5px;top:4.3px;width:15.9px;height:16.9px;" viewBox="0 0 16 17"><path d="M8 .7C5.8 2.1 3.4 2.7.9 2.7v5.5c0 4 2.8 6.7 7.1 8.1 4.3-1.4 7.1-4.1 7.1-8.1V2.7C12.6 2.7 10.2 2.1 8 .7z" fill="url(#sg)" stroke="#1f861c" stroke-width="1.2"/><path d="M4.3 8.3l2.7 2.6 4.7-5.2" fill="none" stroke="#fff" stroke-width="2.7"/></svg><svg style="left:1380.5px;top:3.2px;width:18px;height:20px;" viewBox="0 0 18 20"><ellipse cx="9" cy="16.6" rx="6" ry="1.8" fill="rgba(0,0,0,.1)"/><circle cx="9" cy="8.5" r="7.7" fill="url(#av)"/><ellipse cx="9.2" cy="5.6" rx="3.5" ry="2.7" fill="rgba(255,255,255,.85)"/></svg><svg style="left:1516.2px;top:5.8px;width:13.4px;height:12.4px;" viewBox="0 0 14 13"><path d="M6 6l6 5.5" stroke="#2383cb" stroke-width="3.2" stroke-linecap="round"/><circle cx="4.4" cy="4.4" r="2.7" fill="none" stroke="#2383cb" stroke-width="2.5"/><path d="M4 4.2L.5 0" stroke="#fff" stroke-width="2.6"/></svg><svg style="left:1569.5px;top:5.5px;width:18px;height:16px;" viewBox="0 0 18 16"><path d="M1.2 1.2h13.2v13.2H1.2z" fill="#fff" stroke="#2383cb" stroke-width="1.9"/><path d="M4 5h4.5M4 8h4.5M4 11h3" stroke="#4a9ad6" stroke-width="1.4"/><path d="M9.8 10.2l2.6 2.7 4.4-5.3" fill="none" stroke="#2383cb" stroke-width="2.1"/></svg></div>
<div class="a r" style="top:859.71px"><div class="cb" style="left:14.7px;top:5.8px;width:12.6px;height:12.6px"></div><svg style="left:59.6px;top:4.8px;width:15.7px;height:15.7px;" viewBox="0 0 16 16"><circle cx="8" cy="8" r="7.5" fill="url(#gg)" stroke="#2f9d24" stroke-width="1"/><path d="M4.3 8.4l2.5 2.4 4.9-5.2" fill="none" stroke="#fff" stroke-width="2.4"/></svg><svg style="left:123.2px;top:4.5px;width:19.6px;height:16.2px;" viewBox="0 0 20 16.5"><rect x=".8" y=".8" width="18.4" height="12.2" rx=".4" fill="url(#mb)" stroke="#3d6e9c" stroke-width="1.5"/><path d="M7.2 13.8h5.6v1.5h-5.6z" fill="#2a2a2a"/><path d="M5 15.3h10v1.2h-10z" fill="#a8a8a8"/></svg><a class="n">KL-W8-01 (Training - Do not modify)</a><a style="left:864.5px">10622</a><svg style="left:973px;top:4.9px;width:18.7px;height:15.2px;color:#2383cb;" viewBox="0 0 19 15.5"><path d="M1.1 1.1h14v9.8h-14z" fill="#fff" stroke="currentColor" stroke-width="2.2" stroke-linejoin="round"/><path d="M4.8 12.6h5" stroke="currentColor" stroke-width="2"/><path d="M11.4 4.2V13.6L14 11.6 15.9 15.3 17.9 14.3 16 10.7 19.2 10.4z" fill="currentColor" stroke="currentColor" stroke-width=".9" stroke-linejoin="round"/></svg><svg style="left:997.2px;top:6.1px;width:16px;height:14px;color:#2383cb;" viewBox="0 0 16 14"><path d="M.8.9h14.4v12.2H.8z" fill="currentColor" fill-opacity=".5" stroke="currentColor" stroke-width="1.6"/><path d="M.8 1.9h14.4" stroke="currentColor" stroke-width="2"/><path d="M2.3 4.6h4.5v3.2H2.3zM9.2 4.6h4.5v3.2H9.2zM2.3 8.9h4.5v3H2.3zM9.2 8.9h4.5v3H9.2z" fill="#fff"/></svg><svg style="left:1019.6px;top:4.4px;width:14.9px;height:14.4px;color:#2383cb;" viewBox="0 0 15 14.5"><path d="M7.5 0L-.3 7.4h2.2v7h4V9.6h3.2v4.8h4v-7h2.2L12.9 5.2V.9h-2.4v2z" fill="currentColor"/></svg><span style="left:1072.5px">Online</span><svg style="left:1247px;top:6px;width:15.5px;height:13.5px;" viewBox="0 0 16 14"><path d="M1.1 1.1h13.8v8.2L11.2 12.9H1.1z" fill="#fff" stroke="#2383cb" stroke-width="2"/><path d="M11 13V9.2h3.8" fill="none" stroke="#8cc4ea" stroke-width="1.2"/></svg><svg style="left:1313.5px;top:4.3px;width:15.9px;height:16.9px;" viewBox="0 0 16 17"><path d="M8 .7C5.8 2.1 3.4 2.7.9 2.7v5.5c0 4 2.8 6.7 7.1 8.1 4.3-1.4 7.1-4.1 7.1-8.1V2.7C12.6 2.7 10.2 2.1 8 .7z" fill="url(#sg)" stroke="#1f861c" stroke-width="1.2"/><path d="M4.3 8.3l2.7 2.6 4.7-5.2" fill="none" stroke="#fff" stroke-width="2.7"/></svg><svg style="left:1380.5px;top:3.2px;width:18px;height:20px;" viewBox="0 0 18 20"><ellipse cx="9" cy="16.6" rx="6" ry="1.8" fill="rgba(0,0,0,.1)"/><circle cx="9" cy="8.5" r="7.7" fill="url(#av)"/><ellipse cx="9.2" cy="5.6" rx="3.5" ry="2.7" fill="rgba(255,255,255,.85)"/></svg><svg style="left:1516.2px;top:5.8px;width:13.4px;height:12.4px;" viewBox="0 0 14 13"><path d="M6 6l6 5.5" stroke="#2383cb" stroke-width="3.2" stroke-linecap="round"/><circle cx="4.4" cy="4.4" r="2.7" fill="none" stroke="#2383cb" stroke-width="2.5"/><path d="M4 4.2L.5 0" stroke="#fff" stroke-width="2.6"/></svg><svg style="left:1569.5px;top:5.5px;width:18px;height:16px;" viewBox="0 0 18 16"><path d="M1.2 1.2h13.2v13.2H1.2z" fill="#fff" stroke="#2383cb" stroke-width="1.9"/><path d="M4 5h4.5M4 8h4.5M4 11h3" stroke="#4a9ad6" stroke-width="1.4"/><path d="M9.8 10.2l2.6 2.7 4.4-5.3" fill="none" stroke="#2383cb" stroke-width="2.1"/></svg></div>
<div class="a r" style="top:884.88px"><div class="cb" style="left:14.7px;top:5.8px;width:12.6px;height:12.6px"></div><svg style="left:58.6px;top:4.6px;width:16.6px;height:15.6px;" viewBox="0 0 18 16"><path d="M9 1.2L17 15H1z" fill="url(#og)" stroke="#ee8216" stroke-width="1.6" stroke-linejoin="round"/><path d="M9 5.2v5.2M9 11.8v1.9" stroke="#fff" stroke-width="2.2"/></svg><svg style="left:123.2px;top:4.5px;width:19.6px;height:16.2px;" viewBox="0 0 20 16.5"><rect x=".8" y=".8" width="18.4" height="12.2" rx=".4" fill="url(#mb)" stroke="#3d6e9c" stroke-width="1.5"/><path d="M7.2 13.8h5.6v1.5h-5.6z" fill="#2a2a2a"/><path d="M5 15.3h10v1.2h-10z" fill="#a8a8a8"/></svg><a class="n">KL-W8-02 (Training - Do not modify)</a><a style="left:864.5px">10622</a><svg style="left:973px;top:4.9px;width:18.7px;height:15.2px;color:#2383cb;" viewBox="0 0 19 15.5"><path d="M1.1 1.1h14v9.8h-14z" fill="#fff" stroke="currentColor" stroke-width="2.2" stroke-linejoin="round"/><path d="M4.8 12.6h5" stroke="currentColor" stroke-width="2"/><path d="M11.4 4.2V13.6L14 11.6 15.9 15.3 17.9 14.3 16 10.7 19.2 10.4z" fill="currentColor" stroke="currentColor" stroke-width=".9" stroke-linejoin="round"/></svg><svg style="left:997.2px;top:6.1px;width:16px;height:14px;color:#2383cb;" viewBox="0 0 16 14"><path d="M.8.9h14.4v12.2H.8z" fill="currentColor" fill-opacity=".5" stroke="currentColor" stroke-width="1.6"/><path d="M.8 1.9h14.4" stroke="currentColor" stroke-width="2"/><path d="M2.3 4.6h4.5v3.2H2.3zM9.2 4.6h4.5v3.2H9.2zM2.3 8.9h4.5v3H2.3zM9.2 8.9h4.5v3H9.2z" fill="#fff"/></svg><svg style="left:1019.6px;top:4.4px;width:14.9px;height:14.4px;color:#2383cb;" viewBox="0 0 15 14.5"><path d="M7.5 0L-.3 7.4h2.2v7h4V9.6h3.2v4.8h4v-7h2.2L12.9 5.2V.9h-2.4v2z" fill="currentColor"/></svg><span style="left:1072.5px">Online</span><svg style="left:1247px;top:6px;width:15.5px;height:13.5px;" viewBox="0 0 16 14"><path d="M.6.6h14.8v8.8l-4 4H.6z" fill="#1a7cc8" stroke="#1a7cc8" stroke-width="1.2"/><path d="M11.2 13.2V9.2h4z" fill="#9acbee"/><path d="M4 5h7.5M4 8h4.5" stroke="#7dbdea" stroke-width="1.5"/></svg><svg style="left:1313.5px;top:4.3px;width:15.9px;height:16.9px;" viewBox="0 0 16 17"><path d="M8 .7C5.8 2.1 3.4 2.7.9 2.7v5.5c0 4 2.8 6.7 7.1 8.1 4.3-1.4 7.1-4.1 7.1-8.1V2.7C12.6 2.7 10.2 2.1 8 .7z" fill="url(#og)" stroke="#ea8a22" stroke-width="1.2"/><path d="M8 4v5.6M8 11v2" stroke="#fff" stroke-width="2.4"/></svg><svg style="left:1380.5px;top:3.2px;width:18px;height:20px;" viewBox="0 0 18 20"><ellipse cx="9" cy="16.6" rx="6" ry="1.8" fill="rgba(0,0,0,.1)"/><circle cx="9" cy="8.5" r="7.7" fill="url(#av)"/><ellipse cx="9.2" cy="5.6" rx="3.5" ry="2.7" fill="rgba(255,255,255,.85)"/></svg><svg style="left:1516.2px;top:5.8px;width:13.4px;height:12.4px;" viewBox="0 0 14 13"><path d="M6 6l6 5.5" stroke="#2383cb" stroke-width="3.2" stroke-linecap="round"/><circle cx="4.4" cy="4.4" r="2.7" fill="none" stroke="#2383cb" stroke-width="2.5"/><path d="M4 4.2L.5 0" stroke="#fff" stroke-width="2.6"/></svg><svg style="left:1569.5px;top:5.5px;width:18px;height:16px;" viewBox="0 0 18 16"><path d="M1.2 1.2h13.2v13.2H1.2z" fill="#fff" stroke="#2383cb" stroke-width="1.9"/><path d="M4 5h4.5M4 8h4.5M4 11h3" stroke="#4a9ad6" stroke-width="1.4"/><path d="M9.8 10.2l2.6 2.7 4.4-5.3" fill="none" stroke="#2383cb" stroke-width="2.1"/></svg></div>
<div class="a r" style="top:910.05px"><div class="cb" style="left:14.7px;top:5.8px;width:12.6px;height:12.6px"></div><svg style="left:58.6px;top:4.6px;width:16.6px;height:15.6px;" viewBox="0 0 18 16"><path d="M9 1.2L17 15H1z" fill="url(#og)" stroke="#ee8216" stroke-width="1.6" stroke-linejoin="round"/><path d="M9 5.2v5.2M9 11.8v1.9" stroke="#fff" stroke-width="2.2"/></svg><svg style="left:123.2px;top:4.5px;width:19.6px;height:16.2px;" viewBox="0 0 20 16.5"><rect x=".8" y=".8" width="18.4" height="12.2" rx=".4" fill="url(#mb)" stroke="#3d6e9c" stroke-width="1.5"/><path d="M7.2 13.8h5.6v1.5h-5.6z" fill="#2a2a2a"/><path d="M5 15.3h10v1.2h-10z" fill="#a8a8a8"/></svg><a class="n">KL-W8-03 (Training - Do not modify)</a><a style="left:864.5px">10622</a><svg style="left:973px;top:4.9px;width:18.7px;height:15.2px;color:#2383cb;" viewBox="0 0 19 15.5"><path d="M1.1 1.1h14v9.8h-14z" fill="#fff" stroke="currentColor" stroke-width="2.2" stroke-linejoin="round"/><path d="M4.8 12.6h5" stroke="currentColor" stroke-width="2"/><path d="M11.4 4.2V13.6L14 11.6 15.9 15.3 17.9 14.3 16 10.7 19.2 10.4z" fill="currentColor" stroke="currentColor" stroke-width=".9" stroke-linejoin="round"/></svg><svg style="left:997.2px;top:6.1px;width:16px;height:14px;color:#2383cb;" viewBox="0 0 16 14"><path d="M.8.9h14.4v12.2H.8z" fill="currentColor" fill-opacity=".5" stroke="currentColor" stroke-width="1.6"/><path d="M.8 1.9h14.4" stroke="currentColor" stroke-width="2"/><path d="M2.3 4.6h4.5v3.2H2.3zM9.2 4.6h4.5v3.2H9.2zM2.3 8.9h4.5v3H2.3zM9.2 8.9h4.5v3H9.2z" fill="#fff"/></svg><svg style="left:1019.6px;top:4.4px;width:14.9px;height:14.4px;color:#2383cb;" viewBox="0 0 15 14.5"><path d="M7.5 0L-.3 7.4h2.2v7h4V9.6h3.2v4.8h4v-7h2.2L12.9 5.2V.9h-2.4v2z" fill="currentColor"/></svg><span style="left:1072.5px">Online</span><svg style="left:1247px;top:6px;width:15.5px;height:13.5px;" viewBox="0 0 16 14"><path d="M1.1 1.1h13.8v8.2L11.2 12.9H1.1z" fill="#fff" stroke="#2383cb" stroke-width="2"/><path d="M11 13V9.2h3.8" fill="none" stroke="#8cc4ea" stroke-width="1.2"/></svg><svg style="left:1313.5px;top:4.3px;width:15.9px;height:16.9px;" viewBox="0 0 16 17"><path d="M8 .7C5.8 2.1 3.4 2.7.9 2.7v5.5c0 4 2.8 6.7 7.1 8.1 4.3-1.4 7.1-4.1 7.1-8.1V2.7C12.6 2.7 10.2 2.1 8 .7z" fill="url(#og)" stroke="#ea8a22" stroke-width="1.2"/><path d="M8 4v5.6M8 11v2" stroke="#fff" stroke-width="2.4"/></svg><svg style="left:1380.5px;top:3.2px;width:18px;height:20px;" viewBox="0 0 18 20"><ellipse cx="9" cy="16.6" rx="6" ry="1.8" fill="rgba(0,0,0,.1)"/><circle cx="9" cy="8.5" r="7.7" fill="url(#av)"/><ellipse cx="9.2" cy="5.6" rx="3.5" ry="2.7" fill="rgba(255,255,255,.85)"/></svg><svg style="left:1516.2px;top:5.8px;width:13.4px;height:12.4px;" viewBox="0 0 14 13"><path d="M6 6l6 5.5" stroke="#2383cb" stroke-width="3.2" stroke-linecap="round"/><circle cx="4.4" cy="4.4" r="2.7" fill="none" stroke="#2383cb" stroke-width="2.5"/><path d="M4 4.2L.5 0" stroke="#fff" stroke-width="2.6"/></svg><svg style="left:1569.5px;top:5.5px;width:18px;height:16px;" viewBox="0 0 18 16"><path d="M1.2 1.2h13.2v13.2H1.2z" fill="#fff" stroke="#2383cb" stroke-width="1.9"/><path d="M4 5h4.5M4 8h4.5M4 11h3" stroke="#4a9ad6" stroke-width="1.4"/><path d="M9.8 10.2l2.6 2.7 4.4-5.3" fill="none" stroke="#2383cb" stroke-width="2.1"/></svg></div>
</div>
</body></html>
